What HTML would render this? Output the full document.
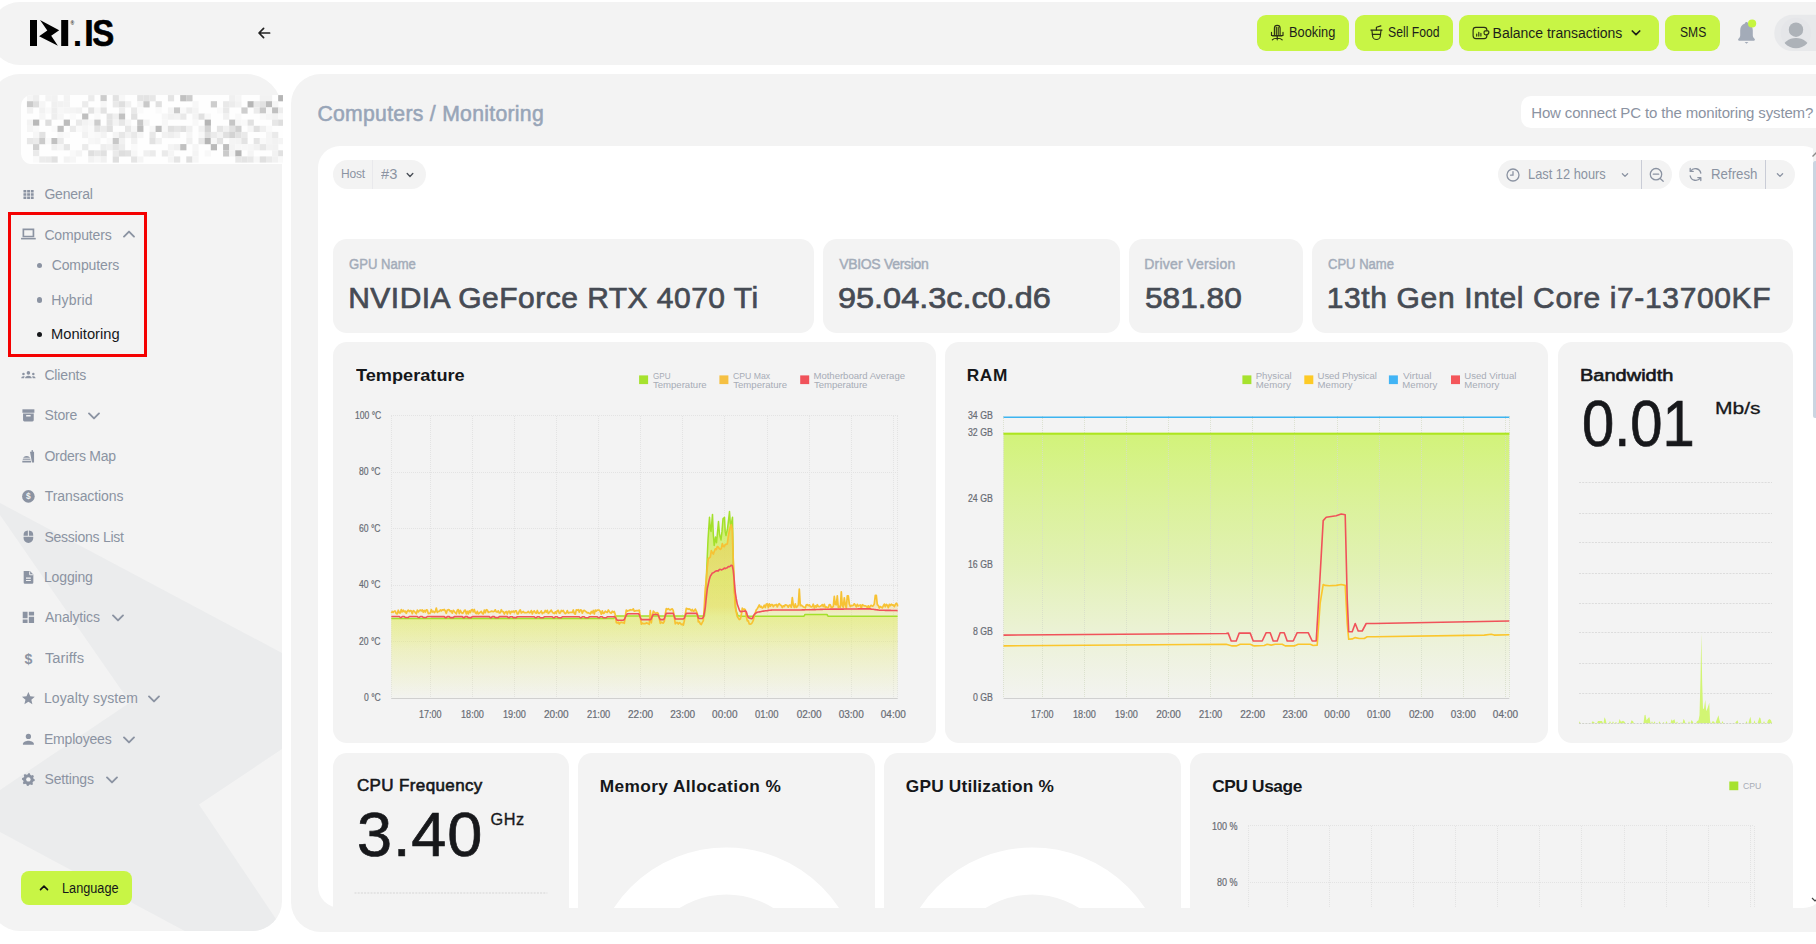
<!DOCTYPE html>
<html lang="en"><head><meta charset="utf-8"><title>Computers / Monitoring</title>
<style>
*{box-sizing:border-box;margin:0;padding:0}
html,body{width:1816px;height:944px;overflow:hidden;background:#fff}
body{position:relative;font-family:"Liberation Sans",sans-serif;color:#8b93a2;font-size:13.5px}
.abs{position:absolute}
.t{position:absolute;white-space:nowrap;line-height:1}
.panel{position:absolute;background:#f3f3f3}
.btn{position:absolute;top:15px;height:36px;background:#c8f545;border-radius:9px;color:#1c1f1a;font-size:13.5px}
.mi{position:absolute;left:44px;white-space:nowrap;line-height:16px;height:16px;font-size:13.5px;color:#8b93a2}
.sub{position:absolute;left:52px;white-space:nowrap;line-height:16px;height:16px;font-size:13.5px;color:#8b93a2}
.ic{position:absolute;left:19.900px;width:16.800px;height:16.800px}
.card{position:absolute;background:#f3f3f3;border-radius:14px}
.lbl{position:absolute;font-size:13px;font-weight:bold;color:#9aa5b5;white-space:nowrap;line-height:1}
.val{position:absolute;font-size:30px;font-weight:bold;color:#3f4650;white-space:nowrap;line-height:1}
.ttl{position:absolute;font-size:16.5px;font-weight:bold;color:#1b1d21;white-space:nowrap;line-height:1}
.pill{position:absolute;top:160px;height:29px;background:#f3f3f3;border-radius:14.5px}
svg{position:absolute;overflow:visible}
svg text{font-family:"Liberation Sans",sans-serif}
</style></head><body>

<div class="panel" style="left:-10px;top:2px;width:1870px;height:63px;border-radius:30px"></div>
<svg style="left:0;top:0" width="140" height="66" viewBox="0 0 140 66">
<rect x="30" y="20" width="7" height="26" fill="#000"/>
<polygon points="40,20 59.2,30.3 51.2,35.7 57.9,45.8 39.1,36.3 47.3,30.6" fill="#000"/>
<rect x="61.2" y="20" width="7" height="26" fill="#000"/>
<text x="70.600" y="25.2" font-size="5" font-weight="bold" fill="#333">®</text>
<text x="72.800" y="46" font-size="34" font-weight="bold" fill="#000">.</text>
<text x="83.800" y="46" font-size="37.8" font-weight="bold" fill="#000">I</text>
<text x="92.200" y="46" font-size="37.8" font-weight="bold" fill="#000" stroke="#000" stroke-width=".6" textLength="22" lengthAdjust="spacingAndGlyphs">S</text>
</svg>
<svg style="left:256px;top:25px" width="16" height="16" viewBox="0 0 16 16"><path d="M13.6 8H3.2M7.6 3.4L3 8l4.6 4.6" fill="none" stroke="#222" stroke-width="1.7" stroke-linecap="round" stroke-linejoin="round"/></svg>
<div class="btn" style="left:1257px;width:92px"></div>
<div class="btn" style="left:1355px;width:98px"></div>
<div class="btn" style="left:1459px;width:200px"></div>
<div class="btn" style="left:1665px;width:55px"></div>
<div class="t" style="left:1288.88px;top:25.25px;font-size:14px;color:#1c1f1a;transform:scaleX(0.9140);transform-origin:0 0;">Booking</div>
<div class="t" style="left:1387.55px;top:25.25px;font-size:14px;color:#1c1f1a;transform:scaleX(0.8714);transform-origin:0 0;">Sell Food</div>
<div class="t" style="left:1492.58px;top:25.95px;font-size:14px;color:#1c1f1a;letter-spacing:-0.009px;">Balance transactions</div>
<div class="t" style="left:1679.66px;top:25.25px;font-size:14px;color:#1c1f1a;transform:scaleX(0.8640);transform-origin:0 0;">SMS</div>
<svg style="left:0;top:0" width="1816" height="66" viewBox="0 0 1816 66" fill="none" stroke="#2b3015" stroke-width="1.15" stroke-linecap="round" stroke-linejoin="round">
<path d="M1274.4 34.8V28.2a2.850 2.850 0 0 1 5.700 0V34.800"/><path d="M1276.300 27.200V34.600M1278.200 27.200V34.600"/>
<path d="M1271.500 32.300V35.500H1283V32.300"/><path d="M1272.600 35.700h9.300" stroke-width="1.500"/><path d="M1277.250 36.300V38"/>
<path d="M1272.300 39.800c1.600-2.100 8.300-2.100 9.900 0M1277.250 38.100v1.700"/>
<path d="M1370.900 30.100H1382"/><path d="M1371.900 30.300l.7 5.600a3.850 3.600 0 0 0 7.700 0l.7-5.600"/><path d="M1372.300 34.300h8.300"/><path d="M1376.400 29.900V27.300L1380.900 25.900"/>
<rect x="1473.100" y="27.400" width="13.800" height="11.200" rx="2.800"/>
<path d="M1485.200 30.800h2.600a1.100 1.100 0 0 1 1.100 1.100v.2a2.700 2.700 0 0 1-2.700 2.700h-.600a1.500 1.500 0 0 1-1.500-1.500v-1.400a1.100 1.100 0 0 1 1.100-1.100z" fill="#c8f545"/>
<path d="M1476.700 36.100V34M1478.800 36.100V32.300M1480.900 36.100V33.400"/>
</svg>
<svg style="left:1630px;top:28px" width="12" height="10" viewBox="0 0 12 10"><path d="M2.300 3l3.700 3.700L9.700 3" fill="none" stroke="#1c1f1a" stroke-width="1.700" stroke-linecap="round" stroke-linejoin="round"/></svg>
<svg style="left:0;top:0" width="1816" height="66" viewBox="0 0 1816 66">
<path d="M1746.500 21.900c-.9 0-1.500.7-1.600 1.500-3 .8-4.700 3.500-4.700 6.800v5.300c0 1.400-1.100 2.600-1.900 3.600-.5.700-.1 1.700.8 1.700h14.800c.9 0 1.300-1 .8-1.700-.8-1-1.900-2.200-1.900-3.600v-5.300c0-3.300-1.700-6-4.700-6.800-.1-.8-.7-1.500-1.600-1.500z" fill="#a3abb8"/>
<path d="M1744.600 42h3.800l-1.900 1.800z" fill="#a3abb8"/>
<circle cx="1752.100" cy="23.500" r="4.100" fill="#c6f53f"/>
<path d="M1792.400 14.800H1830V51.100H1792.400A18.150 18.150 0 0 1 1792.400 14.800z" fill="#e8e9eb"/>
<clipPath id="avc"><circle cx="1796" cy="33" r="15.200"/></clipPath>
<circle cx="1796" cy="33" r="15.200" fill="#e5e6e9"/>
<g clip-path="url(#avc)" fill="#adb2b8"><circle cx="1796" cy="29.700" r="7.200"/><ellipse cx="1796" cy="48.500" rx="13.500" ry="10.400"/></g>
</svg>
<div class="panel" style="left:-10px;top:74px;width:292px;height:856.500px;border-radius:30px 36px 30px 30px;overflow:hidden">
<svg style="left:10px;top:-74px" width="282" height="944" viewBox="0 0 282 944"><polygon points="0,503 282,653 282,749 199,804.5 282,928 282,944 209,944 0,832 0,790 130,702.500 0,515" fill="#ebeced"/></svg>
</div>
<svg style="left:21px;top:94.700px" width="262" height="69.200" viewBox="0 0 262 69.200"><clipPath id="pxc"><path d="M11 0H262V69.200H11A11 11 0 0 1 0 58.200V11A11 11 0 0 1 11 0z"/></clipPath><g clip-path="url(#pxc)"><rect width="262" height="69.200" fill="#fefefe"/>
<rect x="5.9" y="0.1" width="6.23" height="6.23" fill="rgb(245,245,245)"/>
<rect x="12.0" y="0.1" width="6.23" height="6.23" fill="rgb(238,238,238)"/>
<rect x="24.3" y="0.1" width="6.23" height="6.23" fill="rgb(243,243,243)"/>
<rect x="30.4" y="0.1" width="6.23" height="6.23" fill="rgb(242,242,242)"/>
<rect x="42.7" y="0.1" width="6.23" height="6.23" fill="rgb(243,243,243)"/>
<rect x="67.2" y="0.1" width="6.23" height="6.23" fill="rgb(235,235,235)"/>
<rect x="79.5" y="0.1" width="6.23" height="6.23" fill="rgb(204,204,204)"/>
<rect x="91.7" y="0.1" width="6.23" height="6.23" fill="rgb(226,226,226)"/>
<rect x="97.9" y="0.1" width="6.23" height="6.23" fill="rgb(247,247,247)"/>
<rect x="116.2" y="0.1" width="6.23" height="6.23" fill="rgb(228,228,228)"/>
<rect x="122.4" y="0.1" width="6.23" height="6.23" fill="rgb(227,227,227)"/>
<rect x="128.5" y="0.1" width="6.23" height="6.23" fill="rgb(231,231,231)"/>
<rect x="146.9" y="0.1" width="6.23" height="6.23" fill="rgb(228,228,228)"/>
<rect x="159.2" y="0.1" width="6.23" height="6.23" fill="rgb(192,192,192)"/>
<rect x="165.3" y="0.1" width="6.23" height="6.23" fill="rgb(204,204,204)"/>
<rect x="208.2" y="0.1" width="6.23" height="6.23" fill="rgb(240,240,240)"/>
<rect x="214.3" y="0.1" width="6.23" height="6.23" fill="rgb(245,245,245)"/>
<rect x="238.8" y="0.1" width="6.23" height="6.23" fill="rgb(242,242,242)"/>
<rect x="245.0" y="0.1" width="6.23" height="6.23" fill="rgb(242,242,242)"/>
<rect x="257.2" y="0.1" width="6.23" height="6.23" fill="rgb(181,181,181)"/>
<rect x="5.9" y="6.2" width="6.23" height="6.23" fill="rgb(202,202,202)"/>
<rect x="12.0" y="6.2" width="6.23" height="6.23" fill="rgb(222,222,222)"/>
<rect x="18.2" y="6.2" width="6.23" height="6.23" fill="rgb(246,246,246)"/>
<rect x="30.4" y="6.2" width="6.23" height="6.23" fill="rgb(240,240,240)"/>
<rect x="36.5" y="6.2" width="6.23" height="6.23" fill="rgb(242,242,242)"/>
<rect x="42.7" y="6.2" width="6.23" height="6.23" fill="rgb(243,243,243)"/>
<rect x="61.1" y="6.2" width="6.23" height="6.23" fill="rgb(236,236,236)"/>
<rect x="79.5" y="6.2" width="6.23" height="6.23" fill="rgb(247,247,247)"/>
<rect x="91.7" y="6.2" width="6.23" height="6.23" fill="rgb(233,233,233)"/>
<rect x="97.9" y="6.2" width="6.23" height="6.23" fill="rgb(223,223,223)"/>
<rect x="104.0" y="6.2" width="6.23" height="6.23" fill="rgb(241,241,241)"/>
<rect x="116.2" y="6.2" width="6.23" height="6.23" fill="rgb(245,245,245)"/>
<rect x="122.4" y="6.2" width="6.23" height="6.23" fill="rgb(201,201,201)"/>
<rect x="134.6" y="6.2" width="6.23" height="6.23" fill="rgb(224,224,224)"/>
<rect x="171.4" y="6.2" width="6.23" height="6.23" fill="rgb(247,247,247)"/>
<rect x="189.8" y="6.2" width="6.23" height="6.23" fill="rgb(205,205,205)"/>
<rect x="202.1" y="6.2" width="6.23" height="6.23" fill="rgb(233,233,233)"/>
<rect x="208.2" y="6.2" width="6.23" height="6.23" fill="rgb(236,236,236)"/>
<rect x="214.3" y="6.2" width="6.23" height="6.23" fill="rgb(242,242,242)"/>
<rect x="226.6" y="6.2" width="6.23" height="6.23" fill="rgb(182,182,182)"/>
<rect x="232.7" y="6.2" width="6.23" height="6.23" fill="rgb(232,232,232)"/>
<rect x="238.8" y="6.2" width="6.23" height="6.23" fill="rgb(226,226,226)"/>
<rect x="245.0" y="6.2" width="6.23" height="6.23" fill="rgb(188,188,188)"/>
<rect x="251.1" y="6.2" width="6.23" height="6.23" fill="rgb(246,246,246)"/>
<rect x="5.9" y="12.4" width="6.23" height="6.23" fill="rgb(242,242,242)"/>
<rect x="18.2" y="12.4" width="6.23" height="6.23" fill="rgb(242,242,242)"/>
<rect x="24.3" y="12.4" width="6.23" height="6.23" fill="rgb(249,249,249)"/>
<rect x="30.4" y="12.4" width="6.23" height="6.23" fill="rgb(238,238,238)"/>
<rect x="36.5" y="12.4" width="6.23" height="6.23" fill="rgb(247,247,247)"/>
<rect x="42.7" y="12.4" width="6.23" height="6.23" fill="rgb(245,245,245)"/>
<rect x="48.8" y="12.4" width="6.23" height="6.23" fill="rgb(244,244,244)"/>
<rect x="54.9" y="12.4" width="6.23" height="6.23" fill="rgb(242,242,242)"/>
<rect x="67.2" y="12.4" width="6.23" height="6.23" fill="rgb(227,227,227)"/>
<rect x="73.3" y="12.4" width="6.23" height="6.23" fill="rgb(247,247,247)"/>
<rect x="79.5" y="12.4" width="6.23" height="6.23" fill="rgb(227,227,227)"/>
<rect x="97.9" y="12.4" width="6.23" height="6.23" fill="rgb(238,238,238)"/>
<rect x="110.1" y="12.4" width="6.23" height="6.23" fill="rgb(233,233,233)"/>
<rect x="116.2" y="12.4" width="6.23" height="6.23" fill="rgb(250,250,250)"/>
<rect x="134.6" y="12.4" width="6.23" height="6.23" fill="rgb(250,250,250)"/>
<rect x="146.9" y="12.4" width="6.23" height="6.23" fill="rgb(244,244,244)"/>
<rect x="153.0" y="12.4" width="6.23" height="6.23" fill="rgb(201,201,201)"/>
<rect x="159.2" y="12.4" width="6.23" height="6.23" fill="rgb(249,249,249)"/>
<rect x="165.3" y="12.4" width="6.23" height="6.23" fill="rgb(237,237,237)"/>
<rect x="171.4" y="12.4" width="6.23" height="6.23" fill="rgb(244,244,244)"/>
<rect x="195.9" y="12.4" width="6.23" height="6.23" fill="rgb(250,250,250)"/>
<rect x="202.1" y="12.4" width="6.23" height="6.23" fill="rgb(233,233,233)"/>
<rect x="220.4" y="12.4" width="6.23" height="6.23" fill="rgb(206,206,206)"/>
<rect x="232.7" y="12.4" width="6.23" height="6.23" fill="rgb(236,236,236)"/>
<rect x="238.8" y="12.4" width="6.23" height="6.23" fill="rgb(201,201,201)"/>
<rect x="245.0" y="12.4" width="6.23" height="6.23" fill="rgb(248,248,248)"/>
<rect x="251.1" y="12.4" width="6.23" height="6.23" fill="rgb(192,192,192)"/>
<rect x="257.2" y="12.4" width="6.23" height="6.23" fill="rgb(237,237,237)"/>
<rect x="18.2" y="18.5" width="6.23" height="6.23" fill="rgb(246,246,246)"/>
<rect x="30.4" y="18.5" width="6.23" height="6.23" fill="rgb(238,238,238)"/>
<rect x="36.5" y="18.5" width="6.23" height="6.23" fill="rgb(246,246,246)"/>
<rect x="48.8" y="18.5" width="6.23" height="6.23" fill="rgb(250,250,250)"/>
<rect x="61.1" y="18.5" width="6.23" height="6.23" fill="rgb(192,192,192)"/>
<rect x="73.3" y="18.5" width="6.23" height="6.23" fill="rgb(250,250,250)"/>
<rect x="85.6" y="18.5" width="6.23" height="6.23" fill="rgb(227,227,227)"/>
<rect x="91.7" y="18.5" width="6.23" height="6.23" fill="rgb(240,240,240)"/>
<rect x="97.9" y="18.5" width="6.23" height="6.23" fill="rgb(194,194,194)"/>
<rect x="110.1" y="18.5" width="6.23" height="6.23" fill="rgb(225,225,225)"/>
<rect x="140.8" y="18.5" width="6.23" height="6.23" fill="rgb(246,246,246)"/>
<rect x="146.9" y="18.5" width="6.23" height="6.23" fill="rgb(241,241,241)"/>
<rect x="153.0" y="18.5" width="6.23" height="6.23" fill="rgb(243,243,243)"/>
<rect x="159.2" y="18.5" width="6.23" height="6.23" fill="rgb(233,233,233)"/>
<rect x="171.4" y="18.5" width="6.23" height="6.23" fill="rgb(244,244,244)"/>
<rect x="177.5" y="18.5" width="6.23" height="6.23" fill="rgb(225,225,225)"/>
<rect x="183.7" y="18.5" width="6.23" height="6.23" fill="rgb(248,248,248)"/>
<rect x="202.1" y="18.5" width="6.23" height="6.23" fill="rgb(241,241,241)"/>
<rect x="214.3" y="18.5" width="6.23" height="6.23" fill="rgb(249,249,249)"/>
<rect x="238.8" y="18.5" width="6.23" height="6.23" fill="rgb(249,249,249)"/>
<rect x="245.0" y="18.5" width="6.23" height="6.23" fill="rgb(245,245,245)"/>
<rect x="251.1" y="18.5" width="6.23" height="6.23" fill="rgb(242,242,242)"/>
<rect x="257.2" y="18.5" width="6.23" height="6.23" fill="rgb(249,249,249)"/>
<rect x="5.9" y="24.6" width="6.23" height="6.23" fill="rgb(243,243,243)"/>
<rect x="12.0" y="24.6" width="6.23" height="6.23" fill="rgb(185,185,185)"/>
<rect x="24.3" y="24.6" width="6.23" height="6.23" fill="rgb(222,222,222)"/>
<rect x="42.7" y="24.6" width="6.23" height="6.23" fill="rgb(189,189,189)"/>
<rect x="54.9" y="24.6" width="6.23" height="6.23" fill="rgb(234,234,234)"/>
<rect x="61.1" y="24.6" width="6.23" height="6.23" fill="rgb(243,243,243)"/>
<rect x="67.2" y="24.6" width="6.23" height="6.23" fill="rgb(247,247,247)"/>
<rect x="73.3" y="24.6" width="6.23" height="6.23" fill="rgb(204,204,204)"/>
<rect x="85.6" y="24.6" width="6.23" height="6.23" fill="rgb(227,227,227)"/>
<rect x="91.7" y="24.6" width="6.23" height="6.23" fill="rgb(244,244,244)"/>
<rect x="97.9" y="24.6" width="6.23" height="6.23" fill="rgb(231,231,231)"/>
<rect x="104.0" y="24.6" width="6.23" height="6.23" fill="rgb(246,246,246)"/>
<rect x="116.2" y="24.6" width="6.23" height="6.23" fill="rgb(199,199,199)"/>
<rect x="122.4" y="24.6" width="6.23" height="6.23" fill="rgb(244,244,244)"/>
<rect x="140.8" y="24.6" width="6.23" height="6.23" fill="rgb(247,247,247)"/>
<rect x="171.4" y="24.6" width="6.23" height="6.23" fill="rgb(248,248,248)"/>
<rect x="183.7" y="24.6" width="6.23" height="6.23" fill="rgb(182,182,182)"/>
<rect x="208.2" y="24.6" width="6.23" height="6.23" fill="rgb(198,198,198)"/>
<rect x="214.3" y="24.6" width="6.23" height="6.23" fill="rgb(247,247,247)"/>
<rect x="220.4" y="24.6" width="6.23" height="6.23" fill="rgb(249,249,249)"/>
<rect x="226.6" y="24.6" width="6.23" height="6.23" fill="rgb(225,225,225)"/>
<rect x="251.1" y="24.6" width="6.23" height="6.23" fill="rgb(231,231,231)"/>
<rect x="257.2" y="24.6" width="6.23" height="6.23" fill="rgb(222,222,222)"/>
<rect x="5.9" y="30.8" width="6.23" height="6.23" fill="rgb(245,245,245)"/>
<rect x="12.0" y="30.8" width="6.23" height="6.23" fill="rgb(249,249,249)"/>
<rect x="30.4" y="30.8" width="6.23" height="6.23" fill="rgb(250,250,250)"/>
<rect x="36.5" y="30.8" width="6.23" height="6.23" fill="rgb(192,192,192)"/>
<rect x="48.8" y="30.8" width="6.23" height="6.23" fill="rgb(235,235,235)"/>
<rect x="54.9" y="30.8" width="6.23" height="6.23" fill="rgb(250,250,250)"/>
<rect x="61.1" y="30.8" width="6.23" height="6.23" fill="rgb(246,246,246)"/>
<rect x="67.2" y="30.8" width="6.23" height="6.23" fill="rgb(250,250,250)"/>
<rect x="73.3" y="30.8" width="6.23" height="6.23" fill="rgb(228,228,228)"/>
<rect x="79.5" y="30.8" width="6.23" height="6.23" fill="rgb(236,236,236)"/>
<rect x="85.6" y="30.8" width="6.23" height="6.23" fill="rgb(224,224,224)"/>
<rect x="104.0" y="30.8" width="6.23" height="6.23" fill="rgb(231,231,231)"/>
<rect x="110.1" y="30.8" width="6.23" height="6.23" fill="rgb(247,247,247)"/>
<rect x="116.2" y="30.8" width="6.23" height="6.23" fill="rgb(189,189,189)"/>
<rect x="128.5" y="30.8" width="6.23" height="6.23" fill="rgb(247,247,247)"/>
<rect x="134.6" y="30.8" width="6.23" height="6.23" fill="rgb(189,189,189)"/>
<rect x="140.8" y="30.8" width="6.23" height="6.23" fill="rgb(248,248,248)"/>
<rect x="146.9" y="30.8" width="6.23" height="6.23" fill="rgb(224,224,224)"/>
<rect x="153.0" y="30.8" width="6.23" height="6.23" fill="rgb(230,230,230)"/>
<rect x="159.2" y="30.8" width="6.23" height="6.23" fill="rgb(224,224,224)"/>
<rect x="165.3" y="30.8" width="6.23" height="6.23" fill="rgb(240,240,240)"/>
<rect x="177.5" y="30.8" width="6.23" height="6.23" fill="rgb(241,241,241)"/>
<rect x="183.7" y="30.8" width="6.23" height="6.23" fill="rgb(211,211,211)"/>
<rect x="195.9" y="30.8" width="6.23" height="6.23" fill="rgb(229,229,229)"/>
<rect x="202.1" y="30.8" width="6.23" height="6.23" fill="rgb(241,241,241)"/>
<rect x="208.2" y="30.8" width="6.23" height="6.23" fill="rgb(226,226,226)"/>
<rect x="214.3" y="30.8" width="6.23" height="6.23" fill="rgb(208,208,208)"/>
<rect x="226.6" y="30.8" width="6.23" height="6.23" fill="rgb(246,246,246)"/>
<rect x="232.7" y="30.8" width="6.23" height="6.23" fill="rgb(224,224,224)"/>
<rect x="238.8" y="30.8" width="6.23" height="6.23" fill="rgb(240,240,240)"/>
<rect x="245.0" y="30.8" width="6.23" height="6.23" fill="rgb(250,250,250)"/>
<rect x="12.0" y="36.9" width="6.23" height="6.23" fill="rgb(246,246,246)"/>
<rect x="18.2" y="36.9" width="6.23" height="6.23" fill="rgb(226,226,226)"/>
<rect x="36.5" y="36.9" width="6.23" height="6.23" fill="rgb(247,247,247)"/>
<rect x="42.7" y="36.9" width="6.23" height="6.23" fill="rgb(250,250,250)"/>
<rect x="61.1" y="36.9" width="6.23" height="6.23" fill="rgb(242,242,242)"/>
<rect x="67.2" y="36.9" width="6.23" height="6.23" fill="rgb(250,250,250)"/>
<rect x="73.3" y="36.9" width="6.23" height="6.23" fill="rgb(248,248,248)"/>
<rect x="79.5" y="36.9" width="6.23" height="6.23" fill="rgb(243,243,243)"/>
<rect x="91.7" y="36.9" width="6.23" height="6.23" fill="rgb(244,244,244)"/>
<rect x="97.9" y="36.9" width="6.23" height="6.23" fill="rgb(231,231,231)"/>
<rect x="104.0" y="36.9" width="6.23" height="6.23" fill="rgb(242,242,242)"/>
<rect x="110.1" y="36.9" width="6.23" height="6.23" fill="rgb(233,233,233)"/>
<rect x="116.2" y="36.9" width="6.23" height="6.23" fill="rgb(246,246,246)"/>
<rect x="128.5" y="36.9" width="6.23" height="6.23" fill="rgb(232,232,232)"/>
<rect x="140.8" y="36.9" width="6.23" height="6.23" fill="rgb(241,241,241)"/>
<rect x="146.9" y="36.9" width="6.23" height="6.23" fill="rgb(238,238,238)"/>
<rect x="153.0" y="36.9" width="6.23" height="6.23" fill="rgb(243,243,243)"/>
<rect x="165.3" y="36.9" width="6.23" height="6.23" fill="rgb(245,245,245)"/>
<rect x="177.5" y="36.9" width="6.23" height="6.23" fill="rgb(248,248,248)"/>
<rect x="183.7" y="36.9" width="6.23" height="6.23" fill="rgb(223,223,223)"/>
<rect x="189.8" y="36.9" width="6.23" height="6.23" fill="rgb(235,235,235)"/>
<rect x="195.9" y="36.9" width="6.23" height="6.23" fill="rgb(243,243,243)"/>
<rect x="202.1" y="36.9" width="6.23" height="6.23" fill="rgb(224,224,224)"/>
<rect x="208.2" y="36.9" width="6.23" height="6.23" fill="rgb(211,211,211)"/>
<rect x="214.3" y="36.9" width="6.23" height="6.23" fill="rgb(226,226,226)"/>
<rect x="220.4" y="36.9" width="6.23" height="6.23" fill="rgb(234,234,234)"/>
<rect x="245.0" y="36.9" width="6.23" height="6.23" fill="rgb(245,245,245)"/>
<rect x="251.1" y="36.9" width="6.23" height="6.23" fill="rgb(234,234,234)"/>
<rect x="5.9" y="43.0" width="6.23" height="6.23" fill="rgb(231,231,231)"/>
<rect x="12.0" y="43.0" width="6.23" height="6.23" fill="rgb(235,235,235)"/>
<rect x="18.2" y="43.0" width="6.23" height="6.23" fill="rgb(203,203,203)"/>
<rect x="24.3" y="43.0" width="6.23" height="6.23" fill="rgb(249,249,249)"/>
<rect x="30.4" y="43.0" width="6.23" height="6.23" fill="rgb(193,193,193)"/>
<rect x="36.5" y="43.0" width="6.23" height="6.23" fill="rgb(234,234,234)"/>
<rect x="67.2" y="43.0" width="6.23" height="6.23" fill="rgb(247,247,247)"/>
<rect x="73.3" y="43.0" width="6.23" height="6.23" fill="rgb(245,245,245)"/>
<rect x="85.6" y="43.0" width="6.23" height="6.23" fill="rgb(249,249,249)"/>
<rect x="91.7" y="43.0" width="6.23" height="6.23" fill="rgb(200,200,200)"/>
<rect x="97.9" y="43.0" width="6.23" height="6.23" fill="rgb(241,241,241)"/>
<rect x="110.1" y="43.0" width="6.23" height="6.23" fill="rgb(241,241,241)"/>
<rect x="128.5" y="43.0" width="6.23" height="6.23" fill="rgb(226,226,226)"/>
<rect x="134.6" y="43.0" width="6.23" height="6.23" fill="rgb(241,241,241)"/>
<rect x="165.3" y="43.0" width="6.23" height="6.23" fill="rgb(240,240,240)"/>
<rect x="177.5" y="43.0" width="6.23" height="6.23" fill="rgb(232,232,232)"/>
<rect x="183.7" y="43.0" width="6.23" height="6.23" fill="rgb(181,181,181)"/>
<rect x="189.8" y="43.0" width="6.23" height="6.23" fill="rgb(247,247,247)"/>
<rect x="195.9" y="43.0" width="6.23" height="6.23" fill="rgb(226,226,226)"/>
<rect x="208.2" y="43.0" width="6.23" height="6.23" fill="rgb(244,244,244)"/>
<rect x="214.3" y="43.0" width="6.23" height="6.23" fill="rgb(243,243,243)"/>
<rect x="220.4" y="43.0" width="6.23" height="6.23" fill="rgb(227,227,227)"/>
<rect x="232.7" y="43.0" width="6.23" height="6.23" fill="rgb(229,229,229)"/>
<rect x="238.8" y="43.0" width="6.23" height="6.23" fill="rgb(249,249,249)"/>
<rect x="245.0" y="43.0" width="6.23" height="6.23" fill="rgb(245,245,245)"/>
<rect x="251.1" y="43.0" width="6.23" height="6.23" fill="rgb(242,242,242)"/>
<rect x="257.2" y="43.0" width="6.23" height="6.23" fill="rgb(244,244,244)"/>
<rect x="12.0" y="49.1" width="6.23" height="6.23" fill="rgb(209,209,209)"/>
<rect x="30.4" y="49.1" width="6.23" height="6.23" fill="rgb(240,240,240)"/>
<rect x="36.5" y="49.1" width="6.23" height="6.23" fill="rgb(246,246,246)"/>
<rect x="42.7" y="49.1" width="6.23" height="6.23" fill="rgb(230,230,230)"/>
<rect x="61.1" y="49.1" width="6.23" height="6.23" fill="rgb(235,235,235)"/>
<rect x="79.5" y="49.1" width="6.23" height="6.23" fill="rgb(238,238,238)"/>
<rect x="85.6" y="49.1" width="6.23" height="6.23" fill="rgb(241,241,241)"/>
<rect x="91.7" y="49.1" width="6.23" height="6.23" fill="rgb(229,229,229)"/>
<rect x="97.9" y="49.1" width="6.23" height="6.23" fill="rgb(237,237,237)"/>
<rect x="110.1" y="49.1" width="6.23" height="6.23" fill="rgb(250,250,250)"/>
<rect x="146.9" y="49.1" width="6.23" height="6.23" fill="rgb(244,244,244)"/>
<rect x="153.0" y="49.1" width="6.23" height="6.23" fill="rgb(240,240,240)"/>
<rect x="159.2" y="49.1" width="6.23" height="6.23" fill="rgb(192,192,192)"/>
<rect x="171.4" y="49.1" width="6.23" height="6.23" fill="rgb(246,246,246)"/>
<rect x="189.8" y="49.1" width="6.23" height="6.23" fill="rgb(186,186,186)"/>
<rect x="202.1" y="49.1" width="6.23" height="6.23" fill="rgb(190,190,190)"/>
<rect x="208.2" y="49.1" width="6.23" height="6.23" fill="rgb(243,243,243)"/>
<rect x="214.3" y="49.1" width="6.23" height="6.23" fill="rgb(247,247,247)"/>
<rect x="220.4" y="49.1" width="6.23" height="6.23" fill="rgb(247,247,247)"/>
<rect x="226.6" y="49.1" width="6.23" height="6.23" fill="rgb(246,246,246)"/>
<rect x="232.7" y="49.1" width="6.23" height="6.23" fill="rgb(242,242,242)"/>
<rect x="238.8" y="49.1" width="6.23" height="6.23" fill="rgb(231,231,231)"/>
<rect x="245.0" y="49.1" width="6.23" height="6.23" fill="rgb(243,243,243)"/>
<rect x="251.1" y="49.1" width="6.23" height="6.23" fill="rgb(242,242,242)"/>
<rect x="12.0" y="55.3" width="6.23" height="6.23" fill="rgb(234,234,234)"/>
<rect x="48.8" y="55.3" width="6.23" height="6.23" fill="rgb(249,249,249)"/>
<rect x="54.9" y="55.3" width="6.23" height="6.23" fill="rgb(244,244,244)"/>
<rect x="67.2" y="55.3" width="6.23" height="6.23" fill="rgb(223,223,223)"/>
<rect x="73.3" y="55.3" width="6.23" height="6.23" fill="rgb(231,231,231)"/>
<rect x="79.5" y="55.3" width="6.23" height="6.23" fill="rgb(225,225,225)"/>
<rect x="91.7" y="55.3" width="6.23" height="6.23" fill="rgb(234,234,234)"/>
<rect x="97.9" y="55.3" width="6.23" height="6.23" fill="rgb(222,222,222)"/>
<rect x="104.0" y="55.3" width="6.23" height="6.23" fill="rgb(226,226,226)"/>
<rect x="110.1" y="55.3" width="6.23" height="6.23" fill="rgb(247,247,247)"/>
<rect x="122.4" y="55.3" width="6.23" height="6.23" fill="rgb(240,240,240)"/>
<rect x="128.5" y="55.3" width="6.23" height="6.23" fill="rgb(235,235,235)"/>
<rect x="140.8" y="55.3" width="6.23" height="6.23" fill="rgb(234,234,234)"/>
<rect x="146.9" y="55.3" width="6.23" height="6.23" fill="rgb(245,245,245)"/>
<rect x="171.4" y="55.3" width="6.23" height="6.23" fill="rgb(244,244,244)"/>
<rect x="183.7" y="55.3" width="6.23" height="6.23" fill="rgb(248,248,248)"/>
<rect x="202.1" y="55.3" width="6.23" height="6.23" fill="rgb(202,202,202)"/>
<rect x="208.2" y="55.3" width="6.23" height="6.23" fill="rgb(244,244,244)"/>
<rect x="214.3" y="55.3" width="6.23" height="6.23" fill="rgb(181,181,181)"/>
<rect x="226.6" y="55.3" width="6.23" height="6.23" fill="rgb(245,245,245)"/>
<rect x="251.1" y="55.3" width="6.23" height="6.23" fill="rgb(242,242,242)"/>
<rect x="257.2" y="55.3" width="6.23" height="6.23" fill="rgb(225,225,225)"/>
<rect x="12.0" y="61.4" width="6.23" height="6.23" fill="rgb(250,250,250)"/>
<rect x="18.2" y="61.4" width="6.23" height="6.23" fill="rgb(236,236,236)"/>
<rect x="24.3" y="61.4" width="6.23" height="6.23" fill="rgb(235,235,235)"/>
<rect x="30.4" y="61.4" width="6.23" height="6.23" fill="rgb(225,225,225)"/>
<rect x="42.7" y="61.4" width="6.23" height="6.23" fill="rgb(243,243,243)"/>
<rect x="48.8" y="61.4" width="6.23" height="6.23" fill="rgb(246,246,246)"/>
<rect x="67.2" y="61.4" width="6.23" height="6.23" fill="rgb(242,242,242)"/>
<rect x="73.3" y="61.4" width="6.23" height="6.23" fill="rgb(247,247,247)"/>
<rect x="79.5" y="61.4" width="6.23" height="6.23" fill="rgb(241,241,241)"/>
<rect x="91.7" y="61.4" width="6.23" height="6.23" fill="rgb(223,223,223)"/>
<rect x="110.1" y="61.4" width="6.23" height="6.23" fill="rgb(229,229,229)"/>
<rect x="116.2" y="61.4" width="6.23" height="6.23" fill="rgb(245,245,245)"/>
<rect x="146.9" y="61.4" width="6.23" height="6.23" fill="rgb(245,245,245)"/>
<rect x="153.0" y="61.4" width="6.23" height="6.23" fill="rgb(229,229,229)"/>
<rect x="165.3" y="61.4" width="6.23" height="6.23" fill="rgb(223,223,223)"/>
<rect x="171.4" y="61.4" width="6.23" height="6.23" fill="rgb(246,246,246)"/>
<rect x="214.3" y="61.4" width="6.23" height="6.23" fill="rgb(231,231,231)"/>
<rect x="220.4" y="61.4" width="6.23" height="6.23" fill="rgb(228,228,228)"/>
<rect x="226.6" y="61.4" width="6.23" height="6.23" fill="rgb(232,232,232)"/>
<rect x="232.7" y="61.4" width="6.23" height="6.23" fill="rgb(247,247,247)"/>
<rect x="238.8" y="61.4" width="6.23" height="6.23" fill="rgb(224,224,224)"/>
<rect x="245.0" y="61.4" width="6.23" height="6.23" fill="rgb(234,234,234)"/>
<rect x="251.1" y="61.4" width="6.23" height="6.23" fill="rgb(241,241,241)"/>
<rect x="257.2" y="61.4" width="6.23" height="6.23" fill="rgb(249,249,249)"/>
</g></svg>
<svg class="ic" style="top:185.5px" viewBox="0 0 16 16"><rect x="3.3" y="3.8" width="2.700" height="2.400" fill="#8b93a2"/><rect x="3.3" y="6.9" width="2.700" height="2.400" fill="#8b93a2"/><rect x="3.3" y="10.0" width="2.700" height="2.400" fill="#8b93a2"/><rect x="6.8" y="3.8" width="2.700" height="2.400" fill="#8b93a2"/><rect x="6.8" y="6.9" width="2.700" height="2.400" fill="#8b93a2"/><rect x="6.8" y="10.0" width="2.700" height="2.400" fill="#8b93a2"/><rect x="10.3" y="3.8" width="2.700" height="2.400" fill="#8b93a2"/><rect x="10.3" y="6.9" width="2.700" height="2.400" fill="#8b93a2"/><rect x="10.3" y="10.0" width="2.700" height="2.400" fill="#8b93a2"/></svg>
<div class="t" style="left:44.40px;top:187.05px;font-size:14px;color:#8b93a2;letter-spacing:-0.210px;">General</div>
<svg class="ic" style="top:226.2px" viewBox="0 0 16 16"><path d="M3.200 3.300h9.600v6.700H3.200z" fill="none" stroke="#8b93a2" stroke-width="1.600"/><path d="M1 11.300h14v1.500H1z" fill="#8b93a2"/></svg>
<div class="t" style="left:44.40px;top:227.75px;font-size:14px;color:#8b93a2;letter-spacing:-0.134px;">Computers</div>
<svg style="left:122px;top:228.1px" width="14" height="13" viewBox="0 0 14 13"><path d="M2 8.600L7 3.600l5 5" fill="none" stroke="#8b93a2" stroke-width="1.900" stroke-linecap="round" stroke-linejoin="round"/></svg>
<svg class="ic" style="top:366.9px" viewBox="0 0 16 16"><circle cx="8" cy="5.600" r="1.700" fill="#8b93a2"/><path d="M4.800 10.800c0-1.700 1.400-2.500 3.200-2.500s3.200.8 3.200 2.500z" fill="#8b93a2"/><circle cx="3.300" cy="6.600" r="1.200" fill="#8b93a2"/><circle cx="12.700" cy="6.600" r="1.200" fill="#8b93a2"/><path d="M1.200 10.800c0-1.300.8-2 2.100-2 .5 0 .9.100 1.200.3-.4.500-.6 1-.6 1.700zM14.800 10.800c0-1.300-.8-2-2.100-2-.5 0-.9.100-1.200.3.400.5.600 1 .6 1.700z" fill="#8b93a2"/></svg>
<div class="t" style="left:44.40px;top:368.45px;font-size:14px;color:#8b93a2;letter-spacing:-.15px;">Clients</div>
<svg class="ic" style="top:406.9px" viewBox="0 0 16 16"><path d="M2.300 2.200h11.400v3.300H2.300z" fill="#8b93a2"/><path d="M2.900 6.300h10.200v6.200a1.300 1.300 0 0 1-1.300 1.300H4.200a1.300 1.300 0 0 1-1.300-1.300z" fill="#8b93a2"/><rect x="5.800" y="7.600" width="4.400" height="1.400" rx=".5" fill="#f3f3f3"/></svg>
<div class="t" style="left:44.47px;top:408.45px;font-size:14px;color:#8b93a2;letter-spacing:-.15px;">Store</div>
<svg style="left:87px;top:408.8px" width="14" height="13" viewBox="0 0 14 13"><path d="M2 4.400l5 5 5-5" fill="none" stroke="#8b93a2" stroke-width="1.900" stroke-linecap="round" stroke-linejoin="round"/></svg>
<svg class="ic" style="top:447.8px" viewBox="0 0 16 16"><path d="M2.200 12.200h8.300v1.500H2.200zM2.600 11.300c0-2.200 1.600-3.600 3.700-3.600s3.700 1.400 3.700 3.600z" fill="#8b93a2"/><path d="M9.500 3.600h3.900v10.100h-2z" fill="#8b93a2"/><rect x="11" y="2" width="1.300" height="2.200" fill="#8b93a2"/><rect x="2" y="9.300" width="8" height=".8" fill="#f3f3f3"/></svg>
<div class="t" style="left:44.47px;top:449.35px;font-size:14px;color:#8b93a2;letter-spacing:-0.259px;">Orders Map</div>
<svg class="ic" style="top:487.7px" viewBox="0 0 16 16"><circle cx="8" cy="8" r="6" fill="#8b93a2"/><text x="8" y="10.800" font-size="8" font-weight="bold" text-anchor="middle" fill="#f3f3f3">$</text></svg>
<div class="t" style="left:44.82px;top:489.25px;font-size:14px;color:#8b93a2;letter-spacing:-0.090px;">Transactions</div>
<svg class="ic" style="top:528.1px" viewBox="0 0 16 16"><path d="M3.400 8.400h9.200v1.300a4.600 4.600 0 0 1-9.200 0zM3.400 7.500V6.800a4.400 4.400 0 0 1 4.100-4.500v5.200zM8.500 2.300a4.400 4.400 0 0 1 4.100 4.500v.7H8.500z" fill="#8b93a2"/></svg>
<div class="t" style="left:44.47px;top:529.65px;font-size:14px;color:#8b93a2;letter-spacing:-0.247px;">Sessions List</div>
<svg class="ic" style="top:568.6px" viewBox="0 0 16 16"><path d="M3.500 2h6l3.200 3.200v7.600a1.200 1.200 0 0 1-1.200 1.200H4.700a1.200 1.200 0 0 1-1.200-1.200z" fill="#8b93a2"/><path d="M9.200 2.300v3.200h3.200" fill="none" stroke="#f3f3f3" stroke-width=".9"/><path d="M5.700 8.700h4.600M5.700 10.900h4.600" stroke="#f3f3f3" stroke-width="1"/></svg>
<div class="t" style="left:43.98px;top:570.15px;font-size:14px;color:#8b93a2;letter-spacing:-.15px;">Logging</div>
<svg class="ic" style="top:608.9px" viewBox="0 0 16 16"><path d="M2.600 2.600h4.600v6.200H2.600zM8.400 2.600h5v3.600h-5zM8.400 7.400h5v6h-5zM2.600 10h4.600v3.400H2.600z" fill="#8b93a2"/></svg>
<div class="t" style="left:45.10px;top:610.45px;font-size:14px;color:#8b93a2;letter-spacing:-.15px;">Analytics</div>
<svg style="left:111px;top:610.8px" width="14" height="13" viewBox="0 0 14 13"><path d="M2 4.400l5 5 5-5" fill="none" stroke="#8b93a2" stroke-width="1.900" stroke-linecap="round" stroke-linejoin="round"/></svg>
<svg class="ic" style="top:649.6px" viewBox="0 0 16 16"><text x="8" y="13" font-size="13.500" font-weight="bold" text-anchor="middle" fill="#8b93a2">$</text></svg>
<div class="t" style="left:44.81px;top:651.15px;font-size:14px;color:#8b93a2;transform:scaleX(1.0515);transform-origin:0 0;">Tariffs</div>
<svg class="ic" style="top:689.9px" viewBox="0 0 16 16"><path d="M8 2l1.800 4 4.300.4-3.300 2.900 1 4.200L8 11.300l-3.800 2.200 1-4.200L1.900 6.400 6.200 6z" fill="#8b93a2"/></svg>
<div class="t" style="left:43.98px;top:691.45px;font-size:14px;color:#8b93a2;letter-spacing:0.102px;">Loyalty system</div>
<svg style="left:147px;top:691.8px" width="14" height="13" viewBox="0 0 14 13"><path d="M2 4.400l5 5 5-5" fill="none" stroke="#8b93a2" stroke-width="1.900" stroke-linecap="round" stroke-linejoin="round"/></svg>
<svg class="ic" style="top:730.8px" viewBox="0 0 16 16"><circle cx="8" cy="5.200" r="2.500" fill="#8b93a2"/><path d="M2.800 13v-.8c0-2 3.400-3 5.200-3s5.200 1 5.200 3v.8z" fill="#8b93a2"/></svg>
<div class="t" style="left:43.98px;top:732.35px;font-size:14px;color:#8b93a2;letter-spacing:-0.190px;">Employees</div>
<svg style="left:122px;top:732.7px" width="14" height="13" viewBox="0 0 14 13"><path d="M2 4.400l5 5 5-5" fill="none" stroke="#8b93a2" stroke-width="1.900" stroke-linecap="round" stroke-linejoin="round"/></svg>
<svg class="ic" style="top:770.9px" viewBox="0 0 16 16"><path d="M8 1.800l1.400.2.500 1.500 1.100.6 1.500-.5 1 1.200-.7 1.400.3 1.200 1.300.8-.2 1.500-1.500.5-.6 1.100.5 1.500-1.200.9-1.400-.7-1.200.3-.8 1.300-1.500-.2-.5-1.500-1.100-.6-1.500.5-.9-1.200.7-1.400-.3-1.200-1.300-.8.2-1.500 1.500-.5.600-1.100-.5-1.500 1.200-.9 1.400.7 1.200-.3z" fill="#8b93a2" transform="translate(.3 .3) scale(.96)"/><circle cx="8" cy="8" r="2.100" fill="#f3f3f3"/></svg>
<div class="t" style="left:44.47px;top:772.45px;font-size:14px;color:#8b93a2;letter-spacing:-.15px;">Settings</div>
<svg style="left:105px;top:772.8px" width="14" height="13" viewBox="0 0 14 13"><path d="M2 4.400l5 5 5-5" fill="none" stroke="#8b93a2" stroke-width="1.900" stroke-linecap="round" stroke-linejoin="round"/></svg>
<div class="abs" style="left:36.6px;top:262.6px;width:5.400px;height:5.400px;border-radius:50%;background:#8b93a2"></div>
<div class="t" style="left:51.70px;top:257.95px;font-size:14px;color:#8b93a2;letter-spacing:-0.109px;">Computers</div>
<div class="abs" style="left:36.6px;top:297.3px;width:5.400px;height:5.400px;border-radius:50%;background:#8b93a2"></div>
<div class="t" style="left:51.28px;top:292.65px;font-size:14px;color:#8b93a2;letter-spacing:0.174px;">Hybrid</div>
<div class="abs" style="left:36.6px;top:332.0px;width:5.400px;height:5.400px;border-radius:50%;background:#15171a"></div>
<div class="t" style="left:51.22px;top:327.35px;font-size:14px;color:#15171a;transform:scaleX(1.0497);transform-origin:0 0;">Monitoring</div>
<div class="abs" style="left:7.500px;top:212.300px;width:139.500px;height:145px;border:3px solid #f40000"></div>
<div class="abs" style="left:21px;top:871px;width:111px;height:34px;border-radius:8px;background:#c8f545"></div>
<svg style="left:38px;top:882px" width="12" height="12" viewBox="0 0 12 12"><path d="M2.500 7.600L6 4.100l3.500 3.500" fill="none" stroke="#111" stroke-width="1.600" stroke-linecap="round" stroke-linejoin="round"/></svg>
<div class="t" style="left:62.18px;top:881.35px;font-size:14px;color:#15171a;transform:scaleX(0.9083);transform-origin:0 0;">Language</div>
<div class="panel" style="left:291px;top:74px;width:1600px;height:858px;border-radius:30px"></div>
<div class="t" style="left:317.44px;top:103.05px;font-size:21.2px;color:#98a5b8;letter-spacing:0.289px;-webkit-text-stroke:0.55px #98a5b8;">Computers / Monitoring</div>
<div class="abs" style="left:1521px;top:95.700px;width:320px;height:32.500px;border-radius:10px;background:#fff"></div>
<div class="t" style="left:1531.20px;top:104.60px;font-size:15px;color:#8b93a2;letter-spacing:-0.141px;">How connect PC to the monitoring system?</div>
<div class="abs" style="left:318px;top:146px;width:1507px;height:762px;border-radius:22px;background:#fff"></div>
<div class="abs" style="left:1812.800px;top:140px;width:4px;height:21px;background:#f3f3f3"></div>
<div class="abs" style="left:1812.800px;top:161px;width:4px;height:257px;background:#cbd5e1;border-radius:2px 0 0 2px"></div>
<svg style="left:1806px;top:147px" width="10" height="10" viewBox="0 0 10 10"><path d="M6.500 9.500L10 6l3 3.500" fill="none" stroke="#8a8a8a" stroke-width="1.300"/></svg>
<svg style="left:1806px;top:894px" width="10" height="10" viewBox="0 0 10 10"><path d="M6 4l3 3 3-3" fill="none" stroke="#444" stroke-width="1.200"/></svg>
<div class="pill" style="left:333px;width:93px"></div>
<div class="abs" style="left:372px;top:160px;width:1px;height:29px;background:#e9e9ec"></div>
<div class="t" style="left:340.94px;top:167.64px;font-size:12px;color:#8b93a2;letter-spacing:-0.180px;">Host</div>
<div class="t" style="left:380.83px;top:166.95px;font-size:14px;color:#8b93a2;transform:scaleX(1.0463);transform-origin:0 0;">#3</div>
<svg style="left:405px;top:171px" width="10" height="8" viewBox="0 0 10 8"><path d="M2.200 2.600L5 5.400l2.800-2.800" fill="none" stroke="#4a4f57" stroke-width="1.400" stroke-linecap="round" stroke-linejoin="round"/></svg>
<div class="pill" style="left:1498px;width:174px"></div>
<div class="abs" style="left:1641px;top:160px;width:1px;height:29px;background:#c9ccd6"></div>
<svg style="left:1505px;top:167px" width="16" height="16" viewBox="0 0 16 16"><circle cx="8" cy="8" r="6" fill="none" stroke="#8b93a2" stroke-width="1.300"/><path d="M8 4.600V8.200H5.600" fill="none" stroke="#8b93a2" stroke-width="1.300" stroke-linecap="round"/></svg>
<div class="t" style="left:1527.57px;top:166.73px;font-size:14.5px;color:#8b93a2;transform:scaleX(0.8851);transform-origin:0 0;">Last 12 hours</div>
<svg style="left:1620px;top:171px" width="10" height="8" viewBox="0 0 10 8"><path d="M2.400 2.800L5 5.400l2.600-2.600" fill="none" stroke="#8b93a2" stroke-width="1.300" stroke-linecap="round" stroke-linejoin="round"/></svg>
<svg style="left:1648px;top:166px" width="18" height="18" viewBox="0 0 18 18"><circle cx="8" cy="8.200" r="5.700" fill="none" stroke="#8b93a2" stroke-width="1.300"/><path d="M5.300 8.200h5.400M12.200 12.400l3 2.800" fill="none" stroke="#8b93a2" stroke-width="1.300" stroke-linecap="round"/></svg>
<div class="pill" style="left:1679px;width:116px"></div>
<div class="abs" style="left:1765px;top:160px;width:1px;height:29px;background:#c9ccd6"></div>
<svg style="left:1687px;top:166px" width="17" height="17" viewBox="0 0 17 17" fill="none" stroke="#8b93a2" stroke-width="1.300" stroke-linecap="round" stroke-linejoin="round">
<path d="M13.800 7.200A5.600 5.600 0 0 0 3.600 5.200"/><path d="M3.200 2.400v3h3"/><path d="M3.200 9.800a5.600 5.600 0 0 0 10.200 2"/><path d="M13.800 14.600v-3h-3"/></svg>
<div class="t" style="left:1710.64px;top:166.73px;font-size:14.5px;color:#8b93a2;transform:scaleX(0.9147);transform-origin:0 0;">Refresh</div>
<svg style="left:1775px;top:171px" width="10" height="8" viewBox="0 0 10 8"><path d="M2.400 2.800L5 5.400l2.600-2.600" fill="none" stroke="#8b93a2" stroke-width="1.300" stroke-linecap="round" stroke-linejoin="round"/></svg>
<div class="card" style="left:333px;top:239px;width:480.5px;height:93.500px"></div>
<div class="t" style="left:349.15px;top:257.05px;font-size:14px;color:#a3acb9;transform:scaleX(0.9343);transform-origin:0 0;-webkit-text-stroke:0.45px #a3acb9;">GPU Name</div>
<div class="t" style="left:348.20px;top:283.21px;font-size:30px;color:#464b54;letter-spacing:0.480px;-webkit-text-stroke:0.7px #464b54;">NVIDIA GeForce RTX 4070 Ti</div>
<div class="card" style="left:823px;top:239px;width:296.5px;height:93.500px"></div>
<div class="t" style="left:839.13px;top:257.05px;font-size:14px;color:#a3acb9;letter-spacing:-0.308px;-webkit-text-stroke:0.45px #a3acb9;">VBIOS Version</div>
<div class="t" style="left:838.34px;top:283.21px;font-size:30px;color:#464b54;transform:scaleX(1.0816);transform-origin:0 0;-webkit-text-stroke:0.7px #464b54;">95.04.3c.c0.d6</div>
<div class="card" style="left:1129px;top:239px;width:174px;height:93.500px"></div>
<div class="t" style="left:1144.28px;top:257.05px;font-size:14px;color:#a3acb9;letter-spacing:0.232px;-webkit-text-stroke:0.45px #a3acb9;">Driver Version</div>
<div class="t" style="left:1144.74px;top:283.21px;font-size:30px;color:#464b54;transform:scaleX(1.0542);transform-origin:0 0;-webkit-text-stroke:0.7px #464b54;">581.80</div>
<div class="card" style="left:1312px;top:239px;width:481px;height:93.500px"></div>
<div class="t" style="left:1328.25px;top:257.05px;font-size:14px;color:#a3acb9;transform:scaleX(0.9317);transform-origin:0 0;-webkit-text-stroke:0.45px #a3acb9;">CPU Name</div>
<div class="t" style="left:1326.65px;top:283.21px;font-size:30px;color:#464b54;letter-spacing:0.645px;-webkit-text-stroke:0.7px #464b54;">13th Gen Intel Core i7-13700KF</div>
<div class="card" style="left:333px;top:342px;width:602.500px;height:400.500px"></div>
<div class="card" style="left:945px;top:342px;width:602.500px;height:400.500px"></div>
<div class="card" style="left:1558px;top:342px;width:235px;height:400.500px"></div>
<div class="card" style="left:333px;top:752.500px;width:235.500px;height:156px;border-radius:14px 14px 0 0"></div>
<div class="card" style="left:578px;top:752.500px;width:297px;height:156px;border-radius:14px 14px 0 0"></div>
<div class="card" style="left:884px;top:752.500px;width:297px;height:156px;border-radius:14px 14px 0 0"></div>
<div class="card" style="left:1190px;top:752.500px;width:603px;height:156px;border-radius:14px 14px 0 0"></div>
<svg style="left:0;top:0" width="1816" height="944" viewBox="0 0 1816 944">
<defs>
<linearGradient id="gG" gradientUnits="userSpaceOnUse" x1="0" y1="512" x2="0" y2="698"><stop offset="0" stop-color="#c6ee5c" stop-opacity=".9"/><stop offset=".4" stop-color="#d4ee62" stop-opacity=".62"/><stop offset=".56" stop-color="#e0ed64" stop-opacity=".54"/><stop offset="1" stop-color="#e4f080" stop-opacity=".03"/></linearGradient>
<linearGradient id="gY" gradientUnits="userSpaceOnUse" x1="0" y1="525" x2="0" y2="698"><stop offset="0" stop-color="#f5c043" stop-opacity=".45"/><stop offset=".47" stop-color="#f4c648" stop-opacity=".3"/><stop offset=".53" stop-color="#f2cc50" stop-opacity=".08"/><stop offset="1" stop-color="#f2d050" stop-opacity="0"/></linearGradient>
<linearGradient id="gR" gradientUnits="userSpaceOnUse" x1="0" y1="566" x2="0" y2="650"><stop offset="0" stop-color="#dcec6a" stop-opacity=".5"/><stop offset=".6" stop-color="#e0ee70" stop-opacity=".2"/><stop offset="1" stop-color="#e0ee70" stop-opacity="0"/></linearGradient>
<linearGradient id="gM" gradientUnits="userSpaceOnUse" x1="0" y1="434" x2="0" y2="698"><stop offset="0" stop-color="#d1f376" stop-opacity=".97"/><stop offset=".5" stop-color="#d6f08a" stop-opacity=".6"/><stop offset="1" stop-color="#e0f0a0" stop-opacity=".04"/></linearGradient>
</defs>
<path d="M391.3,698.2H897.6M391.3,641.7H897.6M391.3,585.1H897.6M391.3,528.6H897.6M391.3,472H897.6M391.3,415.5H897.6M391.3,415.5V698.2M430,415.5V698.2M472.1,415.5V698.2M514.2,415.5V698.2M556.4,415.5V698.2M598.5,415.5V698.2M640.6,415.5V698.2M682.7,415.5V698.2M724.8,415.5V698.2M767,415.5V698.2M809.1,415.5V698.2M851.2,415.5V698.2M893.3,415.5V698.2M897.6,415.5V698.2" stroke="#e3e3e3" stroke-width="1" stroke-dasharray="1 1" fill="none" shape-rendering="crispEdges"/>
<path d="M391.3,698.500H897.6" stroke="#d0d0d0" stroke-width="1"/>
<path d="M391.3,618.5L392.3,618.5L393.3,618.5L394.3,618.5L395.3,618.5L396.3,618.5L397.3,618.5L398.3,618.5L399.3,618.5L400.3,618.5L401.3,618.5L402.3,618.5L403.3,618.5L404.3,618.5L405.3,618.5L406.3,618.5L407.3,618.5L408.3,618.5L409.3,618.5L410.3,618.5L411.3,618.5L412.3,618.5L413.3,618.5L414.3,618.5L415.3,618.5L416.3,618.5L417.3,618.5L418.3,618.5L419.3,618.5L420.3,618.5L421.3,618.5L422.3,618.5L423.3,618.5L424.3,618.5L425.3,618.5L426.3,618.5L427.3,618.5L428.3,618.5L429.3,618.5L430.3,618.5L431.3,618.5L432.3,618.5L433.3,618.5L434.3,618.5L435.3,618.5L436.3,618.5L437.3,618.5L438.3,618.5L439.3,618.5L440.3,618.5L441.3,618.5L442.3,618.5L443.3,618.5L444.3,618.5L445.3,618.5L446.3,618.5L447.3,618.5L448.3,618.5L449.3,618.5L450.3,618.5L451.3,618.5L452.3,618.5L453.3,618.5L454.3,618.5L455.3,618.5L456.3,618.5L457.3,618.5L458.3,618.5L459.3,618.5L460.3,618.5L461.3,618.5L462.3,618.5L463.3,618.5L464.3,618.5L465.3,618.5L466.3,618.5L467.3,618.5L468.3,618.5L469.3,618.5L470.3,618.5L471.3,618.5L472.3,618.5L473.3,618.5L474.3,618.5L475.3,618.5L476.3,618.5L477.3,618.5L478.3,618.5L479.3,618.5L480.3,618.5L481.3,618.5L482.3,618.5L483.3,618.5L484.3,618.5L485.3,618.5L486.3,618.5L487.3,618.5L488.3,618.5L489.3,618.5L490.3,618.5L491.3,618.5L492.3,618.5L493.3,618.5L494.3,618.5L495.3,618.5L496.3,618.5L497.3,618.5L498.3,618.5L499.3,618.5L500.3,618.5L501.3,618.5L502.3,618.5L503.3,618.5L504.3,618.5L505.3,618.5L506.3,618.5L507.3,618.5L508.3,618.5L509.3,618.5L510.3,618.5L511.3,618.5L512.3,618.5L513.3,618.5L514.3,618.5L515.3,618.5L516.3,618.5L517.3,618.5L518.3,618.5L519.3,618.5L520.3,618.5L521.3,618.5L522.3,618.5L523.3,618.5L524.3,618.5L525.3,618.5L526.3,618.5L527.3,618.5L528.3,618.5L529.3,618.5L530.3,618.5L531.3,618.5L532.3,618.5L533.3,618.5L534.3,618.5L535.3,618.5L536.3,618.5L537.3,618.5L538.3,618.5L539.3,618.5L540.3,618.5L541.3,618.5L542.3,618.5L543.3,618.5L544.3,618.5L545.3,618.5L546.3,618.5L547.3,618.5L548.3,618.5L549.3,618.5L550.3,618.5L551.3,618.5L552.3,618.5L553.3,618.5L554.3,618.5L555.3,618.5L556.3,618.5L557.3,618.5L558.3,618.5L559.3,618.5L560.3,618.5L561.3,618.5L562.3,618.5L563.3,618.5L564.3,618.5L565.3,618.5L566.3,618.5L567.3,618.5L568.3,618.5L569.3,618.5L570.3,618.5L571.3,618.5L572.3,618.5L573.3,618.5L574.3,618.5L575.3,618.5L576.3,618.5L577.3,618.5L578.3,618.5L579.3,618.5L580.3,618.5L581.3,618.5L582.3,618.5L583.3,618.5L584.3,618.5L585.3,618.5L586.3,618.5L587.3,618.5L588.3,618.5L589.3,618.5L590.3,618.5L591.3,618.5L592.3,618.5L593.3,618.5L594.3,618.5L595.3,618.5L596.3,618.5L597.3,618.5L598.3,618.5L599.3,618.5L600.3,618.5L601.3,618.5L602.3,618.5L603.3,618.5L604.3,618.5L605.3,618.5L606.3,618.5L607.3,618.5L608.3,618.5L609.3,618.5L610.3,618.5L611.3,618.5L612.3,618.5L613.3,618.5L614,618.5L614.3,617.7L615,615.9L615.3,615.9L616.3,615.9L617.3,615.9L618.3,615.9L619.3,615.9L620.3,615.9L621.3,615.9L622.3,615.9L623.3,615.9L624.3,615.9L625.3,615.9L626.3,615.9L627.3,615.9L628.3,615.9L629.3,615.9L630.3,615.9L631.3,615.9L632.3,615.9L633.3,615.9L634.3,615.9L635.3,615.9L636.3,615.9L637.3,615.9L638.3,615.9L639.3,615.9L640.3,615.9L641.3,615.9L642.3,615.9L643.3,615.9L644.3,615.9L645.3,615.9L646.3,615.9L647.3,615.9L648.3,615.9L649.3,615.9L650.3,615.9L651.3,615.9L652.3,615.9L653.3,615.9L654.3,615.9L655.3,615.9L656.3,615.9L657.3,615.9L658.3,615.9L659.3,615.9L660.3,615.9L661.3,615.9L662.3,615.9L663.3,615.9L664.3,615.9L665.3,615.9L666.3,615.9L667.3,615.9L668.3,615.9L669.3,615.9L670.3,615.9L671.3,615.9L672.3,615.9L673.3,615.9L674.3,615.9L675.3,615.9L676.3,615.9L677.3,615.9L678.3,615.9L679.3,615.9L680.3,615.9L681.3,615.9L682.3,615.9L683.3,615.9L684.3,615.9L685.3,615.9L686.3,615.9L687.3,615.9L688.3,615.9L689.3,615.9L690.3,615.9L691.3,615.9L692.3,615.9L693.3,615.9L694.3,615.9L695.3,615.9L696.3,615.9L697.3,615.9L698.3,615.9L699.3,615.9L700.3,615.9L701.3,615.9L702.3,615.9L703.3,615.9L704.3,615.9L704.5,615.9L705.3,599.5L706,585.1L706.3,578.3L707.3,555.7L708,539.9L708.3,535.4L709.3,520.3L709.5,517.3L710.3,528.6L711,531.4L711.3,528L712.3,516.7L712.5,514.4L713.3,534.2L714.2,545.5L714.3,544.9L715.3,538.4L715.5,537.1L716.3,541.6L716.5,542.7L717.3,534.2L718.3,523.6L718.5,521.5L719.3,531.7L719.5,534.2L720.3,537.2L721,539.9L721.3,537.3L722,531.4L722.3,527.6L723,518.7L723.3,518.4L724.3,517.5L724.5,517.3L725.2,531.4L725.3,531.9L726,535.6L726.3,534.2L727.3,529.5L727.5,528.6L728.3,521.8L729.3,513.3L729.5,511.6L730.3,522.9L731,525.8L731.3,524.1L732.3,518.4L732.5,517.3L733.2,556.9L733.3,560.4L734,585.1L734.3,588.9L735.3,601.7L736,610.6L736.3,611.3L737.3,613.9L738,615.7L738.3,615.7L739.3,615.9L740.3,616.1L741,616.2L741.3,616.2L742.3,616.2L743.3,616.2L744.3,616.2L745.3,616.2L746.3,616.2L747.3,616.2L748.3,616.2L749.3,616.2L750.3,616.2L751.3,616.2L752.3,616.2L753.3,616.2L754.3,616.2L755.3,616.2L756.3,616.2L757.3,616.2L758.3,616.2L759.3,616.2L760.3,616.2L761.3,616.2L762.3,616.2L763.3,616.2L764.3,616.2L765.3,616.2L766.3,616.2L767.3,616.2L768.3,616.2L769.3,616.2L770.3,616.2L771.3,616.2L772.3,616.2L773.3,616.2L774.3,616.2L775.3,616.2L776.3,616.2L777.3,616.2L778.3,616.2L779.3,616.2L780.3,616.2L781.3,616.2L782.3,616.2L783.3,616.2L784.3,616.2L785.3,616.2L786.3,616.2L787.3,616.2L788.3,616.2L789.3,616.2L790.3,616.2L791.3,616.2L792.3,616.2L793.3,616.2L794.3,616.2L795.3,616.2L796.3,616.2L797.3,616.2L798.3,616.2L799.3,616.2L800.3,616.2L801.3,616.2L802.3,616.2L803.3,616.2L804,616.2L804.3,615.7L805,614.5L805.3,614.5L806.3,614.5L807.3,614.5L808.3,614.5L809.3,614.5L810.3,614.5L811.3,614.5L812.3,614.5L813.3,614.5L814.3,614.5L815.3,614.5L816.3,614.5L817.3,614.5L818.3,614.5L819.3,614.5L820.3,614.5L821.3,614.5L822.3,614.5L823.3,614.5L824.3,614.5L825.3,614.5L826.3,614.5L827,614.5L827.3,615L828,616.2L828.3,616.2L829.3,616.2L830.3,616.2L831.3,616.2L832.3,616.2L833.3,616.2L834.3,616.2L835.3,616.2L836.3,616.2L837.3,616.2L838.3,616.2L839.3,616.2L840.3,616.2L841.3,616.2L842.3,616.2L843.3,616.2L844.3,616.2L845.3,616.2L846.3,616.2L847.3,616.2L848.3,616.2L849.3,616.2L850.3,616.2L851.3,616.2L852.3,616.2L853.3,616.2L854.3,616.2L855.3,616.2L856.3,616.2L857.3,616.2L858.3,616.2L859.3,616.2L860.3,616.2L861.3,616.2L862.3,616.2L863.3,616.2L864.3,616.2L865.3,616.2L866.3,616.2L867.3,616.2L868.3,616.2L869.3,616.2L870.3,616.2L871.3,616.2L872.3,616.2L873.3,616.2L874.3,616.2L875.3,616.2L876.3,616.2L877.3,616.2L878.3,616.2L879.3,616.2L880.3,616.2L881.3,616.2L882.3,616.2L883.3,616.2L884.3,616.2L885.3,616.2L886.3,616.2L887.3,616.2L888.3,616.2L889.3,616.2L890.3,616.2L891.3,616.2L892.3,616.2L893.3,616.2L894.3,616.2L895.3,616.2L896.3,616.2L897.3,616.2L897.6,616.2L897.6,698.2L391.3,698.2Z" fill="url(#gG)"/>
<path d="M391.3,612.9L392.3,611.5L393.3,612.3L394.3,611.2L395.3,611.1L396.3,613.7L397.3,613.9L398.3,610.2L399.3,612.8L400.3,612.9L401.3,609.5L402.3,611.8L403.3,610.2L404.3,611.8L405.3,611.1L406.3,613.3L407.3,611.1L408.3,610.1L409.3,611.6L410.3,610.6L411.3,610.9L412.3,613.7L413.3,610.6L414.3,611.3L415.3,612.6L416.3,613.8L417.3,610.1L418.3,611.9L419.3,610.7L420.3,610L421.3,610.8L422.3,609.8L423.3,612.2L424.3,610.4L425.3,612L426.3,609.8L427.3,610L428.3,613.6L429.3,613.4L430.3,613L431.3,609.6L432.3,612L433.3,611.2L434.3,612.6L435.3,611.7L436.3,608L437.3,612.4L438.3,611.4L439.3,611.4L440.3,609.9L441.3,610.9L442.3,609.8L443.3,610.1L444.3,609.5L445.3,611L446.3,613.3L447.3,610.1L448.3,609.7L449.3,609.9L450.3,611.5L451.3,610.8L452.3,613.1L453.3,610.3L454.3,611.4L455.3,612.7L456.3,613.8L457.3,610.2L458.3,609.6L459.3,613.6L460.3,610.4L461.3,612.2L462.3,613.4L463.3,612.7L464.3,610.6L465.3,610.1L466.3,613.9L467.3,611.3L468.3,613.9L469.3,610.8L470.3,612.6L471.3,610.1L472.3,609.6L473.3,611.8L474.3,609.5L475.3,612.7L476.3,613.7L477.3,611.4L478.3,613.9L479.3,613.2L480.3,612.2L481.3,611.3L482.3,613.4L483.3,613.9L484.3,610.1L485.3,612.7L486.3,609.7L487.3,610L488.3,612.4L489.3,612L490.3,611.7L491.3,611.2L492.3,611.4L493.3,611.6L494.3,611.3L495.3,609.8L496.3,611.8L497.3,612.1L498.3,610.8L499.3,613L500.3,612.7L501.3,609.7L502.3,611.7L503.3,611.6L504.3,614L505.3,612.2L506.3,611.5L507.3,614L508.3,611.3L509.3,611.2L510.3,613.8L511.3,611.3L512.3,612L513.3,611L514.3,612.5L515.3,610.9L516.3,610.8L517.3,614L518.3,613.8L519.3,611.1L520.3,609.8L521.3,613L522.3,612.1L523.3,611.4L524.3,612.7L525.3,612.5L526.3,612.7L527.3,612.5L528.3,611.4L529.3,612.8L530.3,612.4L531.3,610.6L532.3,614L533.3,611.6L534.3,610.8L535.3,612.7L536.3,613.1L537.3,610.5L538.3,613.1L539.3,613.3L540.3,612.2L541.3,611L542.3,613.7L543.3,612.7L544.3,612.6L545.3,610.4L546.3,612.2L547.3,610.3L548.3,613.4L549.3,612.6L550.3,611.2L551.3,610.2L552.3,612.1L553.3,613.1L554.3,613.6L555.3,611.8L556.3,613.3L557.3,610.5L558.3,610.4L559.3,613.3L560.3,612.9L561.3,610.5L562.3,611.3L563.3,610.5L564.3,612.6L565.3,613.6L566.3,612.9L567.3,610.6L568.3,613L569.3,612.6L570.3,612.3L571.3,612.3L572.3,612.3L573.3,610L574.3,613.5L575.3,614.2L576.3,609.9L577.3,610.2L578.3,609.7L579.3,612.2L580.3,609.9L581.3,610L582.3,613.2L583.3,610.8L584.3,610.4L585.3,611.2L586.3,611.9L587.3,612.9L588.3,612.7L589.3,613.2L590.3,613.9L591.3,611.5L592.3,612.9L593.3,610.5L594.3,614L595.3,610.1L596.3,611.1L597.3,610L598.3,610.2L599.3,610.2L600.3,611.6L601.3,614.2L602.3,610.9L603.3,613.4L604.3,612.9L605.3,611.2L606.3,611.9L607.3,612.4L608.3,610L609.3,611.5L610.3,612.7L611.3,613.1L612.3,611.2L613.3,612.3L614.3,611.5L615.3,614.8L616.3,622.4L617.3,623L618.3,622.2L619.3,624.1L620.3,622.5L621.3,622.2L622.3,622.6L623.3,622.6L624.3,623.3L625.3,616.1L626.3,610.1L627.3,611.2L628.3,610.6L629.3,610.5L630.3,609.7L631.3,610L632.3,609.8L633.3,608.9L634.3,611.1L635.3,610.9L636.3,610.6L637.3,610.6L638.3,610.7L639.3,610.1L640.3,617.3L641.3,624.2L642.3,623.1L643.3,623.7L644.3,623.7L645.3,623.7L646.3,622.9L647.3,623.1L648.3,623.8L649.3,624.3L650.3,610.6L651.3,622.8L652.3,615.7L653.3,611.1L654.3,612.2L655.3,613.1L656.3,613L657.3,612.5L658.3,613.6L659.3,618.4L660.3,623.3L661.3,622.2L662.3,622.7L663.3,623.2L664.3,621.3L665.3,614L666.3,608.6L667.3,609.4L668.3,608.7L669.3,609.4L670.3,610L671.3,609.2L672.3,608.8L673.3,610.6L674.3,617.2L675.3,623.8L676.3,622.6L677.3,622.5L678.3,624.1L679.3,622.7L680.3,623.1L681.3,624.6L682.3,624.1L683.3,625.2L684.3,621L685.3,614.1L686.3,608.4L687.3,608.7L688.3,609.1L689.3,608.9L690.3,609.5L691.3,610.8L692.3,609.5L693.3,611.2L694.3,610.9L695.3,609.1L696.3,611.2L697.3,613.6L698.3,621.9L699.3,621.6L700.3,623.8L701.3,624.5L702.3,622.4L703.3,620.9L704.3,606.4L705.3,588.3L706.3,580.1L707.3,567L708.3,558.6L709.3,557.8L710.3,557.1L711.3,550.7L712.3,552.6L713.3,554.1L714.3,551.3L715.3,548.9L716.3,549.5L717.3,546.5L718.3,547L719.3,548.6L720.3,549.3L721.3,548.5L722.3,543.6L723.3,546.4L724.3,546.6L725.3,544.3L726.3,544.3L727.3,543.9L728.3,536.5L729.3,530.8L730.3,527.2L731.3,524.7L732.3,530L733.3,561.3L734.3,590.8L735.3,607.3L736.3,612L737.3,616.6L738.3,618.1L739.3,619.6L740.3,619.1L741.3,615L742.3,608.1L743.3,609.6L744.3,609.1L745.3,609.7L746.3,616.7L747.3,620.8L748.3,620.9L749.3,624L750.3,624.1L751.3,623.7L752.3,622.4L753.3,620.4L754.3,615.8L755.3,612.7L756.3,609.8L757.3,608.7L758.3,606.8L759.3,604.9L760.3,607.2L761.3,606.3L762.3,608.1L763.3,607.1L764.3,605.2L765.3,607.5L766.3,604L767.3,603.9L768.3,607.6L769.3,603.8L770.3,606.3L771.3,604.5L772.3,604.6L773.3,606.7L774.3,605L775.3,605.1L776.3,604.4L777.3,606.8L778.3,604.6L779.3,603.7L780.3,605L781.3,605.6L782.3,607.5L783.3,605.8L784.3,606.5L785.3,604.8L786.3,605L787.3,605.5L788.3,607.2L789.3,605.1L790.3,605.2L791.3,607.3L792.3,597.6L793.3,605.1L794.3,607.5L795.3,603.9L796.3,607.4L797.3,606.6L798.3,604.8L799.3,589.1L800.3,605.6L801.3,605.2L802.3,606L803.3,606.7L804.3,607.3L805.3,607.8L806.3,604.9L807.3,604.7L808.3,605.7L809.3,604.8L810.3,606.5L811.3,606.9L812.3,606.4L813.3,604.2L814.3,607.9L815.3,605.8L816.3,607L817.3,604.7L818.3,606.5L819.3,606.6L820.3,606.3L821.3,605.7L822.3,604.6L823.3,606.5L824.3,604.3L825.3,607.6L826.3,606.9L827.3,607.7L828.3,607.6L829.3,604.6L830.3,604.9L831.3,607.3L832.3,607.3L833.3,606.3L834.3,596.4L835.3,604.5L836.3,604.8L837.3,595.9L838.3,607.5L839.3,606.4L840.3,607.3L841.3,591.9L842.3,605.6L843.3,607.3L844.3,597.8L845.3,604.7L846.3,608.1L847.3,595.9L848.3,595.9L849.3,603.9L850.3,606.5L851.3,605.7L852.3,605.6L853.3,605.3L854.3,603.8L855.3,605.1L856.3,606.9L857.3,604.3L858.3,606L859.3,605.5L860.3,604.9L861.3,608.2L862.3,604.7L863.3,605.2L864.3,606L865.3,605.9L866.3,606.2L867.3,607.4L868.3,605.8L869.3,608.1L870.3,606L871.3,605.3L872.3,606.2L873.3,605.7L874.3,603.9L875.3,595.3L876.3,595.3L877.3,604.7L878.3,605.4L879.3,608L880.3,606.6L881.3,607.2L882.3,607.9L883.3,605.8L884.3,604.1L885.3,606.8L886.3,604.3L887.3,605.1L888.3,607.7L889.3,604.4L890.3,605.6L891.3,604.1L892.3,605.1L893.3,604.9L894.3,606.7L895.3,604.6L896.3,603.2L897.3,604.4L897.6,606.3L897.6,698.2L391.3,698.2Z" fill="url(#gY)"/>
<path d="M391.3,616.5L392.3,616.5L393.3,616.5L394.3,616.5L395.3,616.5L396.3,616.5L397.3,616.5L398.3,616.5L399.3,616.5L400.3,617.5L401.3,617.5L402.3,616.5L403.3,616.5L404.3,616.5L405.3,617.5L406.3,617.5L407.3,617.5L408.3,617.5L409.3,616.5L410.3,616.5L411.3,616.5L412.3,616.5L413.3,616.5L414.3,616.5L415.3,616.5L416.3,616.5L417.3,616.5L418.3,617.5L419.3,617.5L420.3,616.5L421.3,616.5L422.3,616.5L423.3,617.5L424.3,617.5L425.3,617.5L426.3,617.5L427.3,616.5L428.3,616.5L429.3,616.5L430.3,616.5L431.3,616.6L432.3,616.6L433.3,616.6L434.3,616.6L435.3,616.6L436.3,616.6L437.3,616.6L438.3,616.6L439.3,616.6L440.3,616.6L441.3,616.6L442.3,616.6L443.3,616.6L444.3,616.6L445.3,617.6L446.3,617.6L447.3,616.6L448.3,616.6L449.3,616.6L450.3,617.6L451.3,617.6L452.3,617.6L453.3,617.6L454.3,616.6L455.3,616.6L456.3,616.6L457.3,616.6L458.3,616.6L459.3,616.6L460.3,616.6L461.3,616.6L462.3,616.6L463.3,617.6L464.3,617.6L465.3,616.6L466.3,616.6L467.3,616.6L468.3,617.6L469.3,617.6L470.3,617.6L471.3,617.6L472.3,616.6L473.3,616.6L474.3,616.6L475.3,616.6L476.3,616.6L477.3,616.6L478.3,616.6L479.3,616.6L480.3,616.6L481.3,616.6L482.3,616.6L483.3,616.6L484.3,616.6L485.3,616.6L486.3,616.6L487.3,616.6L488.3,616.6L489.3,616.6L490.3,617.6L491.3,617.6L492.3,616.6L493.3,616.6L494.3,616.6L495.3,617.6L496.3,617.6L497.3,617.6L498.3,617.6L499.3,616.6L500.3,616.6L501.3,616.6L502.3,616.6L503.3,616.6L504.3,616.6L505.3,616.6L506.3,616.6L507.3,616.6L508.3,617.6L509.3,617.6L510.3,616.7L511.3,616.7L512.3,616.7L513.3,617.6L514.3,617.6L515.3,617.6L516.3,617.6L517.3,616.7L518.3,616.7L519.3,616.7L520.3,616.7L521.3,616.7L522.3,616.7L523.3,616.7L524.3,616.7L525.3,616.7L526.3,616.7L527.3,616.7L528.3,616.7L529.3,616.7L530.3,616.7L531.3,616.7L532.3,616.7L533.3,616.7L534.3,616.7L535.3,617.7L536.3,617.7L537.3,616.7L538.3,616.7L539.3,616.7L540.3,617.7L541.3,617.7L542.3,617.7L543.3,617.7L544.3,616.7L545.3,616.7L546.3,616.7L547.3,616.7L548.3,616.7L549.3,616.7L550.3,616.7L551.3,616.7L552.3,616.7L553.3,617.7L554.3,617.7L555.3,616.7L556.3,616.7L557.3,616.7L558.3,617.7L559.3,617.7L560.3,617.7L561.3,617.7L562.3,616.7L563.3,616.7L564.3,616.7L565.3,616.7L566.3,616.7L567.3,616.7L568.3,616.7L569.3,616.7L570.3,616.7L571.3,616.7L572.3,616.7L573.3,616.7L574.3,616.7L575.3,616.7L576.3,616.7L577.3,616.7L578.3,616.7L579.3,616.7L580.3,617.7L581.3,617.7L582.3,616.7L583.3,616.7L584.3,616.7L585.3,617.7L586.3,617.7L587.3,617.7L588.3,617.7L589.3,616.8L590.3,616.8L591.3,616.8L592.3,616.8L593.3,616.8L594.3,616.8L595.3,616.8L596.3,616.8L597.3,616.8L598.3,617.8L599.3,617.8L600.3,616.8L601.3,616.8L602.3,616.8L603.3,617.8L604.3,617.8L605.3,617.8L606.3,617.8L607.3,616.8L608.3,616.8L609.3,616.8L610.3,616.8L611.3,616.8L612.3,616.8L613.3,616.7L614.3,616.6L615.3,617.1L616.3,618.9L617.3,620.2L618.3,620.2L619.3,620.2L620.3,620.2L621.3,620.2L622.3,620.2L623.3,620.2L624.3,619.5L625.3,617.4L626.3,615.2L627.3,613.7L628.3,613.7L629.3,613.7L630.3,613.7L631.3,613.7L632.3,613.7L633.3,613.7L634.3,613.7L635.3,613.7L636.3,613.7L637.3,613.7L638.3,613.7L639.3,614.6L640.3,617.5L641.3,619.6L642.3,619.6L643.3,619.6L644.3,619.6L645.3,619.6L646.3,619.6L647.3,619.6L648.3,619.6L649.3,619.6L650.3,619.6L651.3,618.8L652.3,616.3L653.3,614.5L654.3,614.5L655.3,614.5L656.3,614.5L657.3,614.5L658.3,615.3L659.3,617.8L660.3,619.6L661.3,619.6L662.3,619.6L663.3,619.6L664.3,618.7L665.3,615.6L666.3,613.4L667.3,613.4L668.3,613.4L669.3,613.4L670.3,613.4L671.3,613.4L672.3,613.4L673.3,613.4L674.3,616.4L675.3,619L676.3,619L677.3,619L678.3,619L679.3,619L680.3,619L681.3,619L682.3,619L683.3,619L684.3,618.2L685.3,615.4L686.3,613.4L687.3,613.4L688.3,613.4L689.3,613.4L690.3,613.4L691.3,613.4L692.3,613.4L693.3,613.4L694.3,613.4L695.3,613.4L696.3,613.4L697.3,614.4L698.3,617.8L699.3,618.5L700.3,618.5L701.3,618.5L702.3,618.5L703.3,617.3L704.3,613.3L705.3,607.3L706.3,597.6L707.3,588.7L708.3,584L709.3,579.4L710.3,576.2L711.3,574.8L712.3,573L713.3,572.7L714.3,572.1L715.3,571.3L716.3,570.9L717.3,570.9L718.3,571L719.3,569.5L720.3,569.4L721.3,569.9L722.3,569.5L723.3,569.1L724.3,568L725.3,568.6L726.3,568L727.3,567.8L728.3,566.5L729.3,566.7L730.3,566.1L731.3,565.2L732.3,565.8L733.3,570.6L734.3,580.9L735.3,592.7L736.3,599L737.3,604.3L738.3,607L739.3,609.8L740.3,611.7L741.3,611.5L742.3,611.4L743.3,611.2L744.3,611.1L745.3,610.9L746.3,611.8L747.3,615.1L748.3,617.5L749.3,617.9L750.3,618.3L751.3,618.7L752.3,618.4L753.3,616.1L754.3,614.3L755.3,613.5L756.3,612.8L757.3,612.2L758.3,612L759.3,611.9L760.3,611.7L761.3,611.5L762.3,611.3L763.3,611.1L764.3,611L765.3,610.8L766.3,610.7L767.3,610.6L768.3,610.4L769.3,610.3L770.3,610.2L771.3,610.1L772.3,610L773.3,610L774.3,610L775.3,610L776.3,610L777.3,610L778.3,610L779.3,610L780.3,610L781.3,610L782.3,610L783.3,610L784.3,610L785.3,610L786.3,610L787.3,610L788.3,610L789.3,610L790.3,610L791.3,610L792.3,610L793.3,610L794.3,610L795.3,610L796.3,610L797.3,610L798.3,610L799.3,610L800.3,610L801.3,610L802.3,609.9L803.3,609.9L804.3,609.9L805.3,609.8L806.3,609.8L807.3,609.8L808.3,609.8L809.3,609.7L810.3,609.7L811.3,609.7L812.3,609.6L813.3,609.6L814.3,609.6L815.3,609.6L816.3,609.5L817.3,609.5L818.3,609.5L819.3,609.5L820.3,609.4L821.3,609.4L822.3,609.4L823.3,609.3L824.3,609.3L825.3,609.3L826.3,609.3L827.3,609.2L828.3,609.2L829.3,609.2L830.3,609.1L831.3,609.1L832.3,609.1L833.3,609.1L834.3,609.1L835.3,609.1L836.3,609.1L837.3,609.1L838.3,609.1L839.3,609.1L840.3,609.1L841.3,609.1L842.3,609.1L843.3,609.1L844.3,609L845.3,609L846.3,609L847.3,609L848.3,609L849.3,609L850.3,609L851.3,609L852.3,609L853.3,609L854.3,609L855.3,609L856.3,609L857.3,609L858.3,608.9L859.3,608.9L860.3,608.9L861.3,608.9L862.3,608.9L863.3,608.9L864.3,608.9L865.3,608.9L866.3,608.9L867.3,608.9L868.3,608.9L869.3,608.9L870.3,608.9L871.3,609.1L872.3,609.2L873.3,609.3L874.3,609.5L875.3,609.6L876.3,609.8L877.3,609.9L878.3,610L879.3,610.2L880.3,610.3L881.3,610.3L882.3,610.3L883.3,610.3L884.3,610.3L885.3,610.4L886.3,610.4L887.3,610.4L888.3,610.4L889.3,610.4L890.3,610.4L891.3,610.5L892.3,610.5L893.3,610.5L894.3,610.5L895.3,610.5L896.3,610.5L897.3,610.6L897.6,610.6L897.6,698.2L391.3,698.2Z" fill="url(#gR)"/>
<path d="M391.3,618.5L392.3,618.5L393.3,618.5L394.3,618.5L395.3,618.5L396.3,618.5L397.3,618.5L398.3,618.5L399.3,618.5L400.3,618.5L401.3,618.5L402.3,618.5L403.3,618.5L404.3,618.5L405.3,618.5L406.3,618.5L407.3,618.5L408.3,618.5L409.3,618.5L410.3,618.5L411.3,618.5L412.3,618.5L413.3,618.5L414.3,618.5L415.3,618.5L416.3,618.5L417.3,618.5L418.3,618.5L419.3,618.5L420.3,618.5L421.3,618.5L422.3,618.5L423.3,618.5L424.3,618.5L425.3,618.5L426.3,618.5L427.3,618.5L428.3,618.5L429.3,618.5L430.3,618.5L431.3,618.5L432.3,618.5L433.3,618.5L434.3,618.5L435.3,618.5L436.3,618.5L437.3,618.5L438.3,618.5L439.3,618.5L440.3,618.5L441.3,618.5L442.3,618.5L443.3,618.5L444.3,618.5L445.3,618.5L446.3,618.5L447.3,618.5L448.3,618.5L449.3,618.5L450.3,618.5L451.3,618.5L452.3,618.5L453.3,618.5L454.3,618.5L455.3,618.5L456.3,618.5L457.3,618.5L458.3,618.5L459.3,618.5L460.3,618.5L461.3,618.5L462.3,618.5L463.3,618.5L464.3,618.5L465.3,618.5L466.3,618.5L467.3,618.5L468.3,618.5L469.3,618.5L470.3,618.5L471.3,618.5L472.3,618.5L473.3,618.5L474.3,618.5L475.3,618.5L476.3,618.5L477.3,618.5L478.3,618.5L479.3,618.5L480.3,618.5L481.3,618.5L482.3,618.5L483.3,618.5L484.3,618.5L485.3,618.5L486.3,618.5L487.3,618.5L488.3,618.5L489.3,618.5L490.3,618.5L491.3,618.5L492.3,618.5L493.3,618.5L494.3,618.5L495.3,618.5L496.3,618.5L497.3,618.5L498.3,618.5L499.3,618.5L500.3,618.5L501.3,618.5L502.3,618.5L503.3,618.5L504.3,618.5L505.3,618.5L506.3,618.5L507.3,618.5L508.3,618.5L509.3,618.5L510.3,618.5L511.3,618.5L512.3,618.5L513.3,618.5L514.3,618.5L515.3,618.5L516.3,618.5L517.3,618.5L518.3,618.5L519.3,618.5L520.3,618.5L521.3,618.5L522.3,618.5L523.3,618.5L524.3,618.5L525.3,618.5L526.3,618.5L527.3,618.5L528.3,618.5L529.3,618.5L530.3,618.5L531.3,618.5L532.3,618.5L533.3,618.5L534.3,618.5L535.3,618.5L536.3,618.5L537.3,618.5L538.3,618.5L539.3,618.5L540.3,618.5L541.3,618.5L542.3,618.5L543.3,618.5L544.3,618.5L545.3,618.5L546.3,618.5L547.3,618.5L548.3,618.5L549.3,618.5L550.3,618.5L551.3,618.5L552.3,618.5L553.3,618.5L554.3,618.5L555.3,618.5L556.3,618.5L557.3,618.5L558.3,618.5L559.3,618.5L560.3,618.5L561.3,618.5L562.3,618.5L563.3,618.5L564.3,618.5L565.3,618.5L566.3,618.5L567.3,618.5L568.3,618.5L569.3,618.5L570.3,618.5L571.3,618.5L572.3,618.5L573.3,618.5L574.3,618.5L575.3,618.5L576.3,618.5L577.3,618.5L578.3,618.5L579.3,618.5L580.3,618.5L581.3,618.5L582.3,618.5L583.3,618.5L584.3,618.5L585.3,618.5L586.3,618.5L587.3,618.5L588.3,618.5L589.3,618.5L590.3,618.5L591.3,618.5L592.3,618.5L593.3,618.5L594.3,618.5L595.3,618.5L596.3,618.5L597.3,618.5L598.3,618.5L599.3,618.5L600.3,618.5L601.3,618.5L602.3,618.5L603.3,618.5L604.3,618.5L605.3,618.5L606.3,618.5L607.3,618.5L608.3,618.5L609.3,618.5L610.3,618.5L611.3,618.5L612.3,618.5L613.3,618.5L614,618.5L614.3,617.7L615,615.9L615.3,615.9L616.3,615.9L617.3,615.9L618.3,615.9L619.3,615.9L620.3,615.9L621.3,615.9L622.3,615.9L623.3,615.9L624.3,615.9L625.3,615.9L626.3,615.9L627.3,615.9L628.3,615.9L629.3,615.9L630.3,615.9L631.3,615.9L632.3,615.9L633.3,615.9L634.3,615.9L635.3,615.9L636.3,615.9L637.3,615.9L638.3,615.9L639.3,615.9L640.3,615.9L641.3,615.9L642.3,615.9L643.3,615.9L644.3,615.9L645.3,615.9L646.3,615.9L647.3,615.9L648.3,615.9L649.3,615.9L650.3,615.9L651.3,615.9L652.3,615.9L653.3,615.9L654.3,615.9L655.3,615.9L656.3,615.9L657.3,615.9L658.3,615.9L659.3,615.9L660.3,615.9L661.3,615.9L662.3,615.9L663.3,615.9L664.3,615.9L665.3,615.9L666.3,615.9L667.3,615.9L668.3,615.9L669.3,615.9L670.3,615.9L671.3,615.9L672.3,615.9L673.3,615.9L674.3,615.9L675.3,615.9L676.3,615.9L677.3,615.9L678.3,615.9L679.3,615.9L680.3,615.9L681.3,615.9L682.3,615.9L683.3,615.9L684.3,615.9L685.3,615.9L686.3,615.9L687.3,615.9L688.3,615.9L689.3,615.9L690.3,615.9L691.3,615.9L692.3,615.9L693.3,615.9L694.3,615.9L695.3,615.9L696.3,615.9L697.3,615.9L698.3,615.9L699.3,615.9L700.3,615.9L701.3,615.9L702.3,615.9L703.3,615.9L704.3,615.9L704.5,615.9L705.3,599.5L706,585.1L706.3,578.3L707.3,555.7L708,539.9L708.3,535.4L709.3,520.3L709.5,517.3L710.3,528.6L711,531.4L711.3,528L712.3,516.7L712.5,514.4L713.3,534.2L714.2,545.5L714.3,544.9L715.3,538.4L715.5,537.1L716.3,541.6L716.5,542.7L717.3,534.2L718.3,523.6L718.5,521.5L719.3,531.7L719.5,534.2L720.3,537.2L721,539.9L721.3,537.3L722,531.4L722.3,527.6L723,518.7L723.3,518.4L724.3,517.5L724.5,517.3L725.2,531.4L725.3,531.9L726,535.6L726.3,534.2L727.3,529.5L727.5,528.6L728.3,521.8L729.3,513.3L729.5,511.6L730.3,522.9L731,525.8L731.3,524.1L732.3,518.4L732.5,517.3L733.2,556.9L733.3,560.4L734,585.1L734.3,588.9L735.3,601.7L736,610.6L736.3,611.3L737.3,613.9L738,615.7L738.3,615.7L739.3,615.9L740.3,616.1L741,616.2L741.3,616.2L742.3,616.2L743.3,616.2L744.3,616.2L745.3,616.2L746.3,616.2L747.3,616.2L748.3,616.2L749.3,616.2L750.3,616.2L751.3,616.2L752.3,616.2L753.3,616.2L754.3,616.2L755.3,616.2L756.3,616.2L757.3,616.2L758.3,616.2L759.3,616.2L760.3,616.2L761.3,616.2L762.3,616.2L763.3,616.2L764.3,616.2L765.3,616.2L766.3,616.2L767.3,616.2L768.3,616.2L769.3,616.2L770.3,616.2L771.3,616.2L772.3,616.2L773.3,616.2L774.3,616.2L775.3,616.2L776.3,616.2L777.3,616.2L778.3,616.2L779.3,616.2L780.3,616.2L781.3,616.2L782.3,616.2L783.3,616.2L784.3,616.2L785.3,616.2L786.3,616.2L787.3,616.2L788.3,616.2L789.3,616.2L790.3,616.2L791.3,616.2L792.3,616.2L793.3,616.2L794.3,616.2L795.3,616.2L796.3,616.2L797.3,616.2L798.3,616.2L799.3,616.2L800.3,616.2L801.3,616.2L802.3,616.2L803.3,616.2L804,616.2L804.3,615.7L805,614.5L805.3,614.5L806.3,614.5L807.3,614.5L808.3,614.5L809.3,614.5L810.3,614.5L811.3,614.5L812.3,614.5L813.3,614.5L814.3,614.5L815.3,614.5L816.3,614.5L817.3,614.5L818.3,614.5L819.3,614.5L820.3,614.5L821.3,614.5L822.3,614.5L823.3,614.5L824.3,614.5L825.3,614.5L826.3,614.5L827,614.5L827.3,615L828,616.2L828.3,616.2L829.3,616.2L830.3,616.2L831.3,616.2L832.3,616.2L833.3,616.2L834.3,616.2L835.3,616.2L836.3,616.2L837.3,616.2L838.3,616.2L839.3,616.2L840.3,616.2L841.3,616.2L842.3,616.2L843.3,616.2L844.3,616.2L845.3,616.2L846.3,616.2L847.3,616.2L848.3,616.2L849.3,616.2L850.3,616.2L851.3,616.2L852.3,616.2L853.3,616.2L854.3,616.2L855.3,616.2L856.3,616.2L857.3,616.2L858.3,616.2L859.3,616.2L860.3,616.2L861.3,616.2L862.3,616.2L863.3,616.2L864.3,616.2L865.3,616.2L866.3,616.2L867.3,616.2L868.3,616.2L869.3,616.2L870.3,616.2L871.3,616.2L872.3,616.2L873.3,616.2L874.3,616.2L875.3,616.2L876.3,616.2L877.3,616.2L878.3,616.2L879.3,616.2L880.3,616.2L881.3,616.2L882.3,616.2L883.3,616.2L884.3,616.2L885.3,616.2L886.3,616.2L887.3,616.2L888.3,616.2L889.3,616.2L890.3,616.2L891.3,616.2L892.3,616.2L893.3,616.2L894.3,616.2L895.3,616.2L896.3,616.2L897.3,616.2L897.6,616.2" fill="none" stroke="#a3e02a" stroke-width="1.5" stroke-linejoin="round"/>
<path d="M391.3,612.9L392.3,611.5L393.3,612.3L394.3,611.2L395.3,611.1L396.3,613.7L397.3,613.9L398.3,610.2L399.3,612.8L400.3,612.9L401.3,609.5L402.3,611.8L403.3,610.2L404.3,611.8L405.3,611.1L406.3,613.3L407.3,611.1L408.3,610.1L409.3,611.6L410.3,610.6L411.3,610.9L412.3,613.7L413.3,610.6L414.3,611.3L415.3,612.6L416.3,613.8L417.3,610.1L418.3,611.9L419.3,610.7L420.3,610L421.3,610.8L422.3,609.8L423.3,612.2L424.3,610.4L425.3,612L426.3,609.8L427.3,610L428.3,613.6L429.3,613.4L430.3,613L431.3,609.6L432.3,612L433.3,611.2L434.3,612.6L435.3,611.7L436.3,608L437.3,612.4L438.3,611.4L439.3,611.4L440.3,609.9L441.3,610.9L442.3,609.8L443.3,610.1L444.3,609.5L445.3,611L446.3,613.3L447.3,610.1L448.3,609.7L449.3,609.9L450.3,611.5L451.3,610.8L452.3,613.1L453.3,610.3L454.3,611.4L455.3,612.7L456.3,613.8L457.3,610.2L458.3,609.6L459.3,613.6L460.3,610.4L461.3,612.2L462.3,613.4L463.3,612.7L464.3,610.6L465.3,610.1L466.3,613.9L467.3,611.3L468.3,613.9L469.3,610.8L470.3,612.6L471.3,610.1L472.3,609.6L473.3,611.8L474.3,609.5L475.3,612.7L476.3,613.7L477.3,611.4L478.3,613.9L479.3,613.2L480.3,612.2L481.3,611.3L482.3,613.4L483.3,613.9L484.3,610.1L485.3,612.7L486.3,609.7L487.3,610L488.3,612.4L489.3,612L490.3,611.7L491.3,611.2L492.3,611.4L493.3,611.6L494.3,611.3L495.3,609.8L496.3,611.8L497.3,612.1L498.3,610.8L499.3,613L500.3,612.7L501.3,609.7L502.3,611.7L503.3,611.6L504.3,614L505.3,612.2L506.3,611.5L507.3,614L508.3,611.3L509.3,611.2L510.3,613.8L511.3,611.3L512.3,612L513.3,611L514.3,612.5L515.3,610.9L516.3,610.8L517.3,614L518.3,613.8L519.3,611.1L520.3,609.8L521.3,613L522.3,612.1L523.3,611.4L524.3,612.7L525.3,612.5L526.3,612.7L527.3,612.5L528.3,611.4L529.3,612.8L530.3,612.4L531.3,610.6L532.3,614L533.3,611.6L534.3,610.8L535.3,612.7L536.3,613.1L537.3,610.5L538.3,613.1L539.3,613.3L540.3,612.2L541.3,611L542.3,613.7L543.3,612.7L544.3,612.6L545.3,610.4L546.3,612.2L547.3,610.3L548.3,613.4L549.3,612.6L550.3,611.2L551.3,610.2L552.3,612.1L553.3,613.1L554.3,613.6L555.3,611.8L556.3,613.3L557.3,610.5L558.3,610.4L559.3,613.3L560.3,612.9L561.3,610.5L562.3,611.3L563.3,610.5L564.3,612.6L565.3,613.6L566.3,612.9L567.3,610.6L568.3,613L569.3,612.6L570.3,612.3L571.3,612.3L572.3,612.3L573.3,610L574.3,613.5L575.3,614.2L576.3,609.9L577.3,610.2L578.3,609.7L579.3,612.2L580.3,609.9L581.3,610L582.3,613.2L583.3,610.8L584.3,610.4L585.3,611.2L586.3,611.9L587.3,612.9L588.3,612.7L589.3,613.2L590.3,613.9L591.3,611.5L592.3,612.9L593.3,610.5L594.3,614L595.3,610.1L596.3,611.1L597.3,610L598.3,610.2L599.3,610.2L600.3,611.6L601.3,614.2L602.3,610.9L603.3,613.4L604.3,612.9L605.3,611.2L606.3,611.9L607.3,612.4L608.3,610L609.3,611.5L610.3,612.7L611.3,613.1L612.3,611.2L613.3,612.3L614.3,611.5L615.3,614.8L616.3,622.4L617.3,623L618.3,622.2L619.3,624.1L620.3,622.5L621.3,622.2L622.3,622.6L623.3,622.6L624.3,623.3L625.3,616.1L626.3,610.1L627.3,611.2L628.3,610.6L629.3,610.5L630.3,609.7L631.3,610L632.3,609.8L633.3,608.9L634.3,611.1L635.3,610.9L636.3,610.6L637.3,610.6L638.3,610.7L639.3,610.1L640.3,617.3L641.3,624.2L642.3,623.1L643.3,623.7L644.3,623.7L645.3,623.7L646.3,622.9L647.3,623.1L648.3,623.8L649.3,624.3L650.3,610.6L651.3,622.8L652.3,615.7L653.3,611.1L654.3,612.2L655.3,613.1L656.3,613L657.3,612.5L658.3,613.6L659.3,618.4L660.3,623.3L661.3,622.2L662.3,622.7L663.3,623.2L664.3,621.3L665.3,614L666.3,608.6L667.3,609.4L668.3,608.7L669.3,609.4L670.3,610L671.3,609.2L672.3,608.8L673.3,610.6L674.3,617.2L675.3,623.8L676.3,622.6L677.3,622.5L678.3,624.1L679.3,622.7L680.3,623.1L681.3,624.6L682.3,624.1L683.3,625.2L684.3,621L685.3,614.1L686.3,608.4L687.3,608.7L688.3,609.1L689.3,608.9L690.3,609.5L691.3,610.8L692.3,609.5L693.3,611.2L694.3,610.9L695.3,609.1L696.3,611.2L697.3,613.6L698.3,621.9L699.3,621.6L700.3,623.8L701.3,624.5L702.3,622.4L703.3,620.9L704.3,606.4L705.3,588.3L706.3,580.1L707.3,567L708.3,558.6L709.3,557.8L710.3,557.1L711.3,550.7L712.3,552.6L713.3,554.1L714.3,551.3L715.3,548.9L716.3,549.5L717.3,546.5L718.3,547L719.3,548.6L720.3,549.3L721.3,548.5L722.3,543.6L723.3,546.4L724.3,546.6L725.3,544.3L726.3,544.3L727.3,543.9L728.3,536.5L729.3,530.8L730.3,527.2L731.3,524.7L732.3,530L733.3,561.3L734.3,590.8L735.3,607.3L736.3,612L737.3,616.6L738.3,618.1L739.3,619.6L740.3,619.1L741.3,615L742.3,608.1L743.3,609.6L744.3,609.1L745.3,609.7L746.3,616.7L747.3,620.8L748.3,620.9L749.3,624L750.3,624.1L751.3,623.7L752.3,622.4L753.3,620.4L754.3,615.8L755.3,612.7L756.3,609.8L757.3,608.7L758.3,606.8L759.3,604.9L760.3,607.2L761.3,606.3L762.3,608.1L763.3,607.1L764.3,605.2L765.3,607.5L766.3,604L767.3,603.9L768.3,607.6L769.3,603.8L770.3,606.3L771.3,604.5L772.3,604.6L773.3,606.7L774.3,605L775.3,605.1L776.3,604.4L777.3,606.8L778.3,604.6L779.3,603.7L780.3,605L781.3,605.6L782.3,607.5L783.3,605.8L784.3,606.5L785.3,604.8L786.3,605L787.3,605.5L788.3,607.2L789.3,605.1L790.3,605.2L791.3,607.3L792.3,597.6L793.3,605.1L794.3,607.5L795.3,603.9L796.3,607.4L797.3,606.6L798.3,604.8L799.3,589.1L800.3,605.6L801.3,605.2L802.3,606L803.3,606.7L804.3,607.3L805.3,607.8L806.3,604.9L807.3,604.7L808.3,605.7L809.3,604.8L810.3,606.5L811.3,606.9L812.3,606.4L813.3,604.2L814.3,607.9L815.3,605.8L816.3,607L817.3,604.7L818.3,606.5L819.3,606.6L820.3,606.3L821.3,605.7L822.3,604.6L823.3,606.5L824.3,604.3L825.3,607.6L826.3,606.9L827.3,607.7L828.3,607.6L829.3,604.6L830.3,604.9L831.3,607.3L832.3,607.3L833.3,606.3L834.3,596.4L835.3,604.5L836.3,604.8L837.3,595.9L838.3,607.5L839.3,606.4L840.3,607.3L841.3,591.9L842.3,605.6L843.3,607.3L844.3,597.8L845.3,604.7L846.3,608.1L847.3,595.9L848.3,595.9L849.3,603.9L850.3,606.5L851.3,605.7L852.3,605.6L853.3,605.3L854.3,603.8L855.3,605.1L856.3,606.9L857.3,604.3L858.3,606L859.3,605.5L860.3,604.9L861.3,608.2L862.3,604.7L863.3,605.2L864.3,606L865.3,605.9L866.3,606.2L867.3,607.4L868.3,605.8L869.3,608.1L870.3,606L871.3,605.3L872.3,606.2L873.3,605.7L874.3,603.9L875.3,595.3L876.3,595.3L877.3,604.7L878.3,605.4L879.3,608L880.3,606.6L881.3,607.2L882.3,607.9L883.3,605.8L884.3,604.1L885.3,606.8L886.3,604.3L887.3,605.1L888.3,607.7L889.3,604.4L890.3,605.6L891.3,604.1L892.3,605.1L893.3,604.9L894.3,606.7L895.3,604.6L896.3,603.2L897.3,604.4L897.6,606.3" fill="none" stroke="#f7c234" stroke-width="1.700" stroke-linejoin="round"/>
<path d="M391.3,616.5L392.3,616.5L393.3,616.5L394.3,616.5L395.3,616.5L396.3,616.5L397.3,616.5L398.3,616.5L399.3,616.5L400.3,617.5L401.3,617.5L402.3,616.5L403.3,616.5L404.3,616.5L405.3,617.5L406.3,617.5L407.3,617.5L408.3,617.5L409.3,616.5L410.3,616.5L411.3,616.5L412.3,616.5L413.3,616.5L414.3,616.5L415.3,616.5L416.3,616.5L417.3,616.5L418.3,617.5L419.3,617.5L420.3,616.5L421.3,616.5L422.3,616.5L423.3,617.5L424.3,617.5L425.3,617.5L426.3,617.5L427.3,616.5L428.3,616.5L429.3,616.5L430.3,616.5L431.3,616.6L432.3,616.6L433.3,616.6L434.3,616.6L435.3,616.6L436.3,616.6L437.3,616.6L438.3,616.6L439.3,616.6L440.3,616.6L441.3,616.6L442.3,616.6L443.3,616.6L444.3,616.6L445.3,617.6L446.3,617.6L447.3,616.6L448.3,616.6L449.3,616.6L450.3,617.6L451.3,617.6L452.3,617.6L453.3,617.6L454.3,616.6L455.3,616.6L456.3,616.6L457.3,616.6L458.3,616.6L459.3,616.6L460.3,616.6L461.3,616.6L462.3,616.6L463.3,617.6L464.3,617.6L465.3,616.6L466.3,616.6L467.3,616.6L468.3,617.6L469.3,617.6L470.3,617.6L471.3,617.6L472.3,616.6L473.3,616.6L474.3,616.6L475.3,616.6L476.3,616.6L477.3,616.6L478.3,616.6L479.3,616.6L480.3,616.6L481.3,616.6L482.3,616.6L483.3,616.6L484.3,616.6L485.3,616.6L486.3,616.6L487.3,616.6L488.3,616.6L489.3,616.6L490.3,617.6L491.3,617.6L492.3,616.6L493.3,616.6L494.3,616.6L495.3,617.6L496.3,617.6L497.3,617.6L498.3,617.6L499.3,616.6L500.3,616.6L501.3,616.6L502.3,616.6L503.3,616.6L504.3,616.6L505.3,616.6L506.3,616.6L507.3,616.6L508.3,617.6L509.3,617.6L510.3,616.7L511.3,616.7L512.3,616.7L513.3,617.6L514.3,617.6L515.3,617.6L516.3,617.6L517.3,616.7L518.3,616.7L519.3,616.7L520.3,616.7L521.3,616.7L522.3,616.7L523.3,616.7L524.3,616.7L525.3,616.7L526.3,616.7L527.3,616.7L528.3,616.7L529.3,616.7L530.3,616.7L531.3,616.7L532.3,616.7L533.3,616.7L534.3,616.7L535.3,617.7L536.3,617.7L537.3,616.7L538.3,616.7L539.3,616.7L540.3,617.7L541.3,617.7L542.3,617.7L543.3,617.7L544.3,616.7L545.3,616.7L546.3,616.7L547.3,616.7L548.3,616.7L549.3,616.7L550.3,616.7L551.3,616.7L552.3,616.7L553.3,617.7L554.3,617.7L555.3,616.7L556.3,616.7L557.3,616.7L558.3,617.7L559.3,617.7L560.3,617.7L561.3,617.7L562.3,616.7L563.3,616.7L564.3,616.7L565.3,616.7L566.3,616.7L567.3,616.7L568.3,616.7L569.3,616.7L570.3,616.7L571.3,616.7L572.3,616.7L573.3,616.7L574.3,616.7L575.3,616.7L576.3,616.7L577.3,616.7L578.3,616.7L579.3,616.7L580.3,617.7L581.3,617.7L582.3,616.7L583.3,616.7L584.3,616.7L585.3,617.7L586.3,617.7L587.3,617.7L588.3,617.7L589.3,616.8L590.3,616.8L591.3,616.8L592.3,616.8L593.3,616.8L594.3,616.8L595.3,616.8L596.3,616.8L597.3,616.8L598.3,617.8L599.3,617.8L600.3,616.8L601.3,616.8L602.3,616.8L603.3,617.8L604.3,617.8L605.3,617.8L606.3,617.8L607.3,616.8L608.3,616.8L609.3,616.8L610.3,616.8L611.3,616.8L612.3,616.8L613.3,616.7L614.3,616.6L615.3,617.1L616.3,618.9L617.3,620.2L618.3,620.2L619.3,620.2L620.3,620.2L621.3,620.2L622.3,620.2L623.3,620.2L624.3,619.5L625.3,617.4L626.3,615.2L627.3,613.7L628.3,613.7L629.3,613.7L630.3,613.7L631.3,613.7L632.3,613.7L633.3,613.7L634.3,613.7L635.3,613.7L636.3,613.7L637.3,613.7L638.3,613.7L639.3,614.6L640.3,617.5L641.3,619.6L642.3,619.6L643.3,619.6L644.3,619.6L645.3,619.6L646.3,619.6L647.3,619.6L648.3,619.6L649.3,619.6L650.3,619.6L651.3,618.8L652.3,616.3L653.3,614.5L654.3,614.5L655.3,614.5L656.3,614.5L657.3,614.5L658.3,615.3L659.3,617.8L660.3,619.6L661.3,619.6L662.3,619.6L663.3,619.6L664.3,618.7L665.3,615.6L666.3,613.4L667.3,613.4L668.3,613.4L669.3,613.4L670.3,613.4L671.3,613.4L672.3,613.4L673.3,613.4L674.3,616.4L675.3,619L676.3,619L677.3,619L678.3,619L679.3,619L680.3,619L681.3,619L682.3,619L683.3,619L684.3,618.2L685.3,615.4L686.3,613.4L687.3,613.4L688.3,613.4L689.3,613.4L690.3,613.4L691.3,613.4L692.3,613.4L693.3,613.4L694.3,613.4L695.3,613.4L696.3,613.4L697.3,614.4L698.3,617.8L699.3,618.5L700.3,618.5L701.3,618.5L702.3,618.5L703.3,617.3L704.3,613.3L705.3,607.3L706.3,597.6L707.3,588.7L708.3,584L709.3,579.4L710.3,576.2L711.3,574.8L712.3,573L713.3,572.7L714.3,572.1L715.3,571.3L716.3,570.9L717.3,570.9L718.3,571L719.3,569.5L720.3,569.4L721.3,569.9L722.3,569.5L723.3,569.1L724.3,568L725.3,568.6L726.3,568L727.3,567.8L728.3,566.5L729.3,566.7L730.3,566.1L731.3,565.2L732.3,565.8L733.3,570.6L734.3,580.9L735.3,592.7L736.3,599L737.3,604.3L738.3,607L739.3,609.8L740.3,611.7L741.3,611.5L742.3,611.4L743.3,611.2L744.3,611.1L745.3,610.9L746.3,611.8L747.3,615.1L748.3,617.5L749.3,617.9L750.3,618.3L751.3,618.7L752.3,618.4L753.3,616.1L754.3,614.3L755.3,613.5L756.3,612.8L757.3,612.2L758.3,612L759.3,611.9L760.3,611.7L761.3,611.5L762.3,611.3L763.3,611.1L764.3,611L765.3,610.8L766.3,610.7L767.3,610.6L768.3,610.4L769.3,610.3L770.3,610.2L771.3,610.1L772.3,610L773.3,610L774.3,610L775.3,610L776.3,610L777.3,610L778.3,610L779.3,610L780.3,610L781.3,610L782.3,610L783.3,610L784.3,610L785.3,610L786.3,610L787.3,610L788.3,610L789.3,610L790.3,610L791.3,610L792.3,610L793.3,610L794.3,610L795.3,610L796.3,610L797.3,610L798.3,610L799.3,610L800.3,610L801.3,610L802.3,609.9L803.3,609.9L804.3,609.9L805.3,609.8L806.3,609.8L807.3,609.8L808.3,609.8L809.3,609.7L810.3,609.7L811.3,609.7L812.3,609.6L813.3,609.6L814.3,609.6L815.3,609.6L816.3,609.5L817.3,609.5L818.3,609.5L819.3,609.5L820.3,609.4L821.3,609.4L822.3,609.4L823.3,609.3L824.3,609.3L825.3,609.3L826.3,609.3L827.3,609.2L828.3,609.2L829.3,609.2L830.3,609.1L831.3,609.1L832.3,609.1L833.3,609.1L834.3,609.1L835.3,609.1L836.3,609.1L837.3,609.1L838.3,609.1L839.3,609.1L840.3,609.1L841.3,609.1L842.3,609.1L843.3,609.1L844.3,609L845.3,609L846.3,609L847.3,609L848.3,609L849.3,609L850.3,609L851.3,609L852.3,609L853.3,609L854.3,609L855.3,609L856.3,609L857.3,609L858.3,608.9L859.3,608.9L860.3,608.9L861.3,608.9L862.3,608.9L863.3,608.9L864.3,608.9L865.3,608.9L866.3,608.9L867.3,608.9L868.3,608.9L869.3,608.9L870.3,608.9L871.3,609.1L872.3,609.2L873.3,609.3L874.3,609.5L875.3,609.6L876.3,609.8L877.3,609.9L878.3,610L879.3,610.2L880.3,610.3L881.3,610.3L882.3,610.3L883.3,610.3L884.3,610.3L885.3,610.4L886.3,610.4L887.3,610.4L888.3,610.4L889.3,610.4L890.3,610.4L891.3,610.5L892.3,610.5L893.3,610.5L894.3,610.5L895.3,610.5L896.3,610.5L897.3,610.6L897.6,610.6" fill="none" stroke="#f0525a" stroke-width="1.600" stroke-linejoin="round"/>
<rect x="639.1" y="375.4" width="9" height="8.700" fill="#a6e22e"/>
<rect x="719.4" y="375.4" width="9" height="8.700" fill="#f5c043"/>
<rect x="800.2" y="375.4" width="9" height="8.700" fill="#f0525a"/>
<path d="M1003.5,432.7H1509.3V698.2H1003.5Z" fill="url(#gM)"/>
<path d="M1003.5,416.1V698.2M1042.2,416.1V698.2M1084.3,416.1V698.2M1126.4,416.1V698.2M1168.6,416.1V698.2M1210.7,416.1V698.2M1252.8,416.1V698.2M1294.9,416.1V698.2M1337,416.1V698.2M1379.2,416.1V698.2M1421.3,416.1V698.2M1463.4,416.1V698.2M1505.5,416.1V698.2M1509.3,416.1V698.2" stroke="#d6dcc8" stroke-width="1" stroke-dasharray="1 1" fill="none" shape-rendering="crispEdges" opacity=".8"/>
<path d="M1003.5,698.500H1509.3" stroke="#d0d0d0" stroke-width="1"/>
<path d="M1003.5,433.7H1509.3" stroke="#ade520" stroke-width="2"/>
<path d="M1003.5,417.2H1509.3" stroke="#3cb4f0" stroke-width="1.400"/>
<path d="M1003.5,645.9L1226.2,644.3L1232.2,645.9L1236.2,645.9L1240.2,644.3L1250.2,644.3L1254.2,645.9L1264.2,645.5L1267.2,644.3L1271.2,645.1L1275.2,644.3L1282.2,644.3L1285.2,645.9L1294.2,645.9L1298.2,644.3L1310.2,644.3L1313.2,645.5L1317.2,645.1L1320.2,602.8L1323.2,584.5L1325.2,585.4L1329.2,585.8L1336.2,585.4L1341.2,584.5L1345.2,585.4L1347.2,623.5L1348.7,639.3L1352.2,638.9L1355.2,637.6L1359.2,638.5L1364.2,638.5L1367.2,636.8L1374.2,636.8L1484.2,635.1L1491.2,634.3L1494.2,635.1L1509.3,634.7" fill="none" stroke="#fbc62c" stroke-width="1.600" stroke-linejoin="round"/>
<path d="M1003.5,635.1L1226.2,633.5L1228.2,633.1L1231.2,641L1236.2,641L1239.2,633.1L1250.2,633.1L1253.2,641L1262.2,641L1266.2,632.7L1270.2,632.7L1273.2,641L1277.2,641L1280.2,632.7L1284.2,632.7L1287.2,641L1293.2,641L1297.2,632.7L1308.2,632.7L1312.2,641L1316.2,641L1320.2,573.7L1323.2,520.6L1326.2,517.3L1336.2,515.7L1341.2,514L1345.2,514.8L1347.2,598.6L1348.7,631.8L1352.2,631.8L1355.2,623.5L1358.2,631L1362.2,631L1366.2,623.5L1374.2,623.5L1509.3,621" fill="none" stroke="#f0525a" stroke-width="1.600" stroke-linejoin="round"/>
<rect x="1242.4" y="375.4" width="9" height="8.700" fill="#a6e22e"/>
<rect x="1304.3" y="375.4" width="9" height="8.700" fill="#fdca26"/>
<rect x="1388.9" y="375.4" width="9" height="8.700" fill="#41b4f5"/>
<rect x="1451" y="375.4" width="9" height="8.700" fill="#f4565a"/>
<path d="M1579.0,482.5H1772.0M1579.0,513.5H1772.0M1579.0,542.5H1772.0M1579.0,573.5H1772.0M1579.0,603.5H1772.0M1579.0,632.5H1772.0M1579.0,663.5H1772.0M1579.0,693.5H1772.0" stroke="#dcdcdc" stroke-width="1" stroke-dasharray="2 1.2" fill="none"/>
<path d="M1578.5,723.3L1579,723.3L1579.5,721.3L1580.5,723.3L1582,723.3L1583,723L1584,723.3L1591.5,723.3L1592.5,721.3L1594,722.1L1595,723.3L1597,723.3L1598,721L1600,721L1602,721L1603,723.3L1603.5,723.3L1604.5,717.3L1605.5,719.3L1606.5,723.3L1609,723.3L1610,721L1611,723.3L1612,723.3L1613,721.3L1614,723.3L1615,723.3L1616,721.7L1617,723.3L1618.5,723.3L1619.5,719.1L1621,721.8L1623,720.7L1624.5,721.7L1625.5,723.3L1630.5,723.3L1631.5,720.3L1633,721.3L1634,723.3L1643.5,723.3L1644.5,715.3L1645.5,714.7L1646.5,720.3L1648.5,717.8L1649.5,717.3L1650.5,723.3L1651,723.3L1652,721.3L1653,723.3L1653.5,723.3L1654.5,721.3L1655.5,723.3L1658.5,723.3L1659.5,721.3L1660.5,723.3L1662.5,723.3L1663.5,722L1664.5,723.3L1665.5,723.3L1666.5,721L1667.5,723.3L1670.5,723.3L1671.5,719.3L1672.5,720.7L1674.5,719.3L1675.5,723.3L1676,723.3L1677,721.5L1678,723.3L1680,723.3L1681,722.3L1682,723.3L1682.5,723.3L1683.5,719.1L1684.5,720.3L1685.5,723.3L1688,723.3L1689,721.3L1690,723.3L1690.5,723.3L1691.5,720L1692.5,721.3L1693.5,723.3L1696,723.3L1697,721.3L1698.5,720.3L1699.5,715.3L1700.5,678.3L1701.3,633.3L1702.2,683.3L1703,709.3L1704,708.3L1705.3,699.8L1706.2,711.3L1707.5,708.3L1709.3,702.8L1710,720.3L1710.6,723.3L1711.5,723.3L1712.5,721.3L1714,721.5L1715,723.3L1715.5,723.3L1716.5,720.3L1718.5,715.3L1719.5,720.3L1720.5,723.3L1721.5,723.3L1722.5,720.9L1723.5,723.3L1735,723.3L1736,721.8L1737.5,720.3L1738.5,723.3L1745.5,723.3L1746.5,721L1747.5,723.3L1748.5,723.3L1749.5,719.3L1750.5,716.8L1751.5,723.3L1753.5,723.3L1754.5,720.3L1755.5,723.3L1757.5,723.3L1758.5,720.3L1759.5,717.3L1760.5,718.3L1761.5,723.3L1763,723.3L1764,721L1765,723.3L1767,723.3L1768,720.3L1769.5,718.9L1771,720.3L1772,723.3Z" fill="#d2f573"/>
<path d="M1579.0,723.5H1772.0" stroke="#cfd1cb" stroke-width="1.200" stroke-dasharray="2 1.2"/>
<path d="M1248.0,825.8H1754.4M1248.0,882.4H1754.4M1248,825.8V908M1287,825.8V908M1329.1,825.8V908M1371.2,825.8V908M1413.4,825.8V908M1455.5,825.8V908M1497.6,825.8V908M1539.7,825.8V908M1581.8,825.8V908M1624,825.8V908M1666.1,825.8V908M1708.2,825.8V908M1750.3,825.8V908M1754.4,825.8V908" stroke="#e3e3e3" stroke-width="1" stroke-dasharray="1 1" fill="none" shape-rendering="crispEdges"/>
<rect x="1729.3" y="781.5" width="9" height="8.700" fill="#a6e22e"/>
<clipPath id="gc1"><rect x="578" y="752" width="297" height="156"/></clipPath><clipPath id="gc2"><rect x="884" y="752" width="297" height="156"/></clipPath>
<circle cx="726.400" cy="982.500" r="111.500" fill="none" stroke="#fff" stroke-width="47" clip-path="url(#gc1)"/>
<circle cx="1032.400" cy="982.500" r="111.500" fill="none" stroke="#fff" stroke-width="47" clip-path="url(#gc2)"/>
<path d="M354.500,893H547.300" stroke="#d6d6d6" stroke-width="1.100" stroke-dasharray="2 1.2"/>
</svg>
<div class="t" style="left:364.06px;top:693.24px;font-size:10px;color:#686c74;transform:scaleX(0.8562);transform-origin:0 0;-webkit-text-stroke:0.2px #686c74;">0 °C</div>
<div class="t" style="left:359.31px;top:636.70px;font-size:10px;color:#686c74;transform:scaleX(0.8562);transform-origin:0 0;-webkit-text-stroke:0.2px #686c74;">20 °C</div>
<div class="t" style="left:359.31px;top:580.15px;font-size:10px;color:#686c74;transform:scaleX(0.8562);transform-origin:0 0;-webkit-text-stroke:0.2px #686c74;">40 °C</div>
<div class="t" style="left:359.31px;top:523.62px;font-size:10px;color:#686c74;transform:scaleX(0.8562);transform-origin:0 0;-webkit-text-stroke:0.2px #686c74;">60 °C</div>
<div class="t" style="left:359.31px;top:467.08px;font-size:10px;color:#686c74;transform:scaleX(0.8562);transform-origin:0 0;-webkit-text-stroke:0.2px #686c74;">80 °C</div>
<div class="t" style="left:354.56px;top:410.54px;font-size:10px;color:#686c74;transform:scaleX(0.8562);transform-origin:0 0;-webkit-text-stroke:0.2px #686c74;">100 °C</div>
<div class="t" style="left:418.58px;top:709.53px;font-size:10px;color:#686c74;transform:scaleX(0.8996);transform-origin:0 0;-webkit-text-stroke:0.2px #686c74;">17:00</div>
<div class="t" style="left:460.54px;top:709.53px;font-size:10px;color:#686c74;transform:scaleX(0.9121);transform-origin:0 0;-webkit-text-stroke:0.2px #686c74;">18:00</div>
<div class="t" style="left:502.66px;top:709.53px;font-size:10px;color:#686c74;transform:scaleX(0.9121);transform-origin:0 0;-webkit-text-stroke:0.2px #686c74;">19:00</div>
<div class="t" style="left:544.06px;top:709.53px;font-size:10px;color:#686c74;letter-spacing:-0.138px;-webkit-text-stroke:0.2px #686c74;">20:00</div>
<div class="t" style="left:586.82px;top:709.53px;font-size:10px;color:#686c74;transform:scaleX(0.9275);transform-origin:0 0;-webkit-text-stroke:0.2px #686c74;">21:00</div>
<div class="t" style="left:628.10px;top:709.53px;font-size:10px;color:#686c74;letter-spacing:-0.037px;-webkit-text-stroke:0.2px #686c74;">22:00</div>
<div class="t" style="left:670.22px;top:709.53px;font-size:10px;color:#686c74;letter-spacing:-0.037px;-webkit-text-stroke:0.2px #686c74;">23:00</div>
<div class="t" style="left:712.09px;top:709.53px;font-size:10px;color:#686c74;letter-spacing:0.113px;-webkit-text-stroke:0.2px #686c74;">00:00</div>
<div class="t" style="left:755.18px;top:709.53px;font-size:10px;color:#686c74;transform:scaleX(0.9402);transform-origin:0 0;-webkit-text-stroke:0.2px #686c74;">01:00</div>
<div class="t" style="left:796.68px;top:709.53px;font-size:10px;color:#686c74;letter-spacing:-0.062px;-webkit-text-stroke:0.2px #686c74;">02:00</div>
<div class="t" style="left:838.65px;top:709.53px;font-size:10px;color:#686c74;letter-spacing:0.012px;-webkit-text-stroke:0.2px #686c74;">03:00</div>
<div class="t" style="left:880.67px;top:709.53px;font-size:10px;color:#686c74;letter-spacing:0.062px;-webkit-text-stroke:0.2px #686c74;">04:00</div>
<div class="t" style="left:652.70px;top:370.77px;font-size:9.6px;color:#a7acb6;transform:scaleX(0.8425);transform-origin:0 0;">GPU</div>
<div class="t" style="left:652.91px;top:379.57px;font-size:9.6px;color:#a7acb6;letter-spacing:-0.008px;">Temperature</div>
<div class="t" style="left:732.97px;top:370.77px;font-size:9.6px;color:#a7acb6;transform:scaleX(0.9059);transform-origin:0 0;">CPU Max</div>
<div class="t" style="left:733.21px;top:379.57px;font-size:9.6px;color:#a7acb6;letter-spacing:-0.008px;">Temperature</div>
<div class="t" style="left:813.43px;top:370.77px;font-size:9.6px;color:#a7acb6;letter-spacing:-0.026px;">Motherboard Average</div>
<div class="t" style="left:814.01px;top:379.57px;font-size:9.6px;color:#a7acb6;letter-spacing:-0.048px;">Temperature</div>
<div class="t" style="left:973.05px;top:693.03px;font-size:10px;color:#686c74;transform:scaleX(0.8743);transform-origin:0 0;-webkit-text-stroke:0.2px #686c74;">0 GB</div>
<div class="t" style="left:973.05px;top:626.66px;font-size:10px;color:#686c74;transform:scaleX(0.8743);transform-origin:0 0;-webkit-text-stroke:0.2px #686c74;">8 GB</div>
<div class="t" style="left:968.15px;top:560.28px;font-size:10px;color:#686c74;transform:scaleX(0.8743);transform-origin:0 0;-webkit-text-stroke:0.2px #686c74;">16 GB</div>
<div class="t" style="left:968.15px;top:493.91px;font-size:10px;color:#686c74;transform:scaleX(0.8743);transform-origin:0 0;-webkit-text-stroke:0.2px #686c74;">24 GB</div>
<div class="t" style="left:968.15px;top:427.54px;font-size:10px;color:#686c74;transform:scaleX(0.8743);transform-origin:0 0;-webkit-text-stroke:0.2px #686c74;">32 GB</div>
<div class="t" style="left:968.15px;top:410.94px;font-size:10px;color:#686c74;transform:scaleX(0.8743);transform-origin:0 0;-webkit-text-stroke:0.2px #686c74;">34 GB</div>
<div class="t" style="left:1030.78px;top:709.53px;font-size:10px;color:#686c74;transform:scaleX(0.8996);transform-origin:0 0;-webkit-text-stroke:0.2px #686c74;">17:00</div>
<div class="t" style="left:1072.74px;top:709.53px;font-size:10px;color:#686c74;transform:scaleX(0.9121);transform-origin:0 0;-webkit-text-stroke:0.2px #686c74;">18:00</div>
<div class="t" style="left:1114.86px;top:709.53px;font-size:10px;color:#686c74;transform:scaleX(0.9121);transform-origin:0 0;-webkit-text-stroke:0.2px #686c74;">19:00</div>
<div class="t" style="left:1156.26px;top:709.53px;font-size:10px;color:#686c74;letter-spacing:-0.138px;-webkit-text-stroke:0.2px #686c74;">20:00</div>
<div class="t" style="left:1199.02px;top:709.53px;font-size:10px;color:#686c74;transform:scaleX(0.9275);transform-origin:0 0;-webkit-text-stroke:0.2px #686c74;">21:00</div>
<div class="t" style="left:1240.30px;top:709.53px;font-size:10px;color:#686c74;letter-spacing:-0.037px;-webkit-text-stroke:0.2px #686c74;">22:00</div>
<div class="t" style="left:1282.42px;top:709.53px;font-size:10px;color:#686c74;letter-spacing:-0.037px;-webkit-text-stroke:0.2px #686c74;">23:00</div>
<div class="t" style="left:1324.29px;top:709.53px;font-size:10px;color:#686c74;letter-spacing:0.112px;-webkit-text-stroke:0.2px #686c74;">00:00</div>
<div class="t" style="left:1367.38px;top:709.53px;font-size:10px;color:#686c74;transform:scaleX(0.9402);transform-origin:0 0;-webkit-text-stroke:0.2px #686c74;">01:00</div>
<div class="t" style="left:1408.88px;top:709.53px;font-size:10px;color:#686c74;letter-spacing:-0.062px;-webkit-text-stroke:0.2px #686c74;">02:00</div>
<div class="t" style="left:1450.85px;top:709.53px;font-size:10px;color:#686c74;letter-spacing:0.013px;-webkit-text-stroke:0.2px #686c74;">03:00</div>
<div class="t" style="left:1492.87px;top:709.53px;font-size:10px;color:#686c74;letter-spacing:0.062px;-webkit-text-stroke:0.2px #686c74;">04:00</div>
<div class="t" style="left:1255.63px;top:370.77px;font-size:9.6px;color:#a7acb6;letter-spacing:0.054px;">Physical</div>
<div class="t" style="left:1255.63px;top:379.57px;font-size:9.6px;color:#a7acb6;letter-spacing:0.102px;">Memory</div>
<div class="t" style="left:1317.58px;top:370.77px;font-size:9.6px;color:#a7acb6;letter-spacing:-0.131px;">Used Physical</div>
<div class="t" style="left:1317.53px;top:379.57px;font-size:9.6px;color:#a7acb6;letter-spacing:0.082px;">Memory</div>
<div class="t" style="left:1402.85px;top:370.77px;font-size:9.6px;color:#a7acb6;transform:scaleX(1.0549);transform-origin:0 0;">Virtual</div>
<div class="t" style="left:1402.13px;top:379.57px;font-size:9.6px;color:#a7acb6;letter-spacing:0.102px;">Memory</div>
<div class="t" style="left:1464.28px;top:370.77px;font-size:9.6px;color:#a7acb6;letter-spacing:0.006px;">Used Virtual</div>
<div class="t" style="left:1464.23px;top:379.57px;font-size:9.6px;color:#a7acb6;letter-spacing:0.082px;">Memory</div>
<div class="t" style="left:1211.92px;top:821.74px;font-size:10px;color:#686c74;transform:scaleX(0.9028);transform-origin:0 0;-webkit-text-stroke:0.2px #686c74;">100 %</div>
<div class="t" style="left:1216.93px;top:877.93px;font-size:10px;color:#686c74;transform:scaleX(0.9028);transform-origin:0 0;-webkit-text-stroke:0.2px #686c74;">80 %</div>
<div class="t" style="left:1742.87px;top:781.27px;font-size:9.6px;color:#a7acb6;transform:scaleX(0.9026);transform-origin:0 0;">CPU</div>
<div class="t" style="left:355.52px;top:367.16px;font-size:17.3px;color:#15171a;transform:scaleX(1.0509);transform-origin:0 0;font-weight:bold;">Temperature</div>
<div class="t" style="left:966.68px;top:367.16px;font-size:17.3px;color:#15171a;letter-spacing:0.646px;font-weight:bold;">RAM</div>
<div class="t" style="left:1579.50px;top:367.16px;font-size:17.3px;color:#15171a;transform:scaleX(1.1573);transform-origin:0 0;-webkit-text-stroke:0.6px #15171a;">Bandwidth</div>
<div class="t" style="left:356.95px;top:777.31px;font-size:17px;color:#15171a;letter-spacing:0.375px;-webkit-text-stroke:0.6px #15171a;">CPU Frequency</div>
<div class="t" style="left:599.78px;top:778.06px;font-size:17.3px;color:#15171a;letter-spacing:0.387px;font-weight:bold;">Memory Allocation %</div>
<div class="t" style="left:905.81px;top:778.06px;font-size:17.3px;color:#15171a;letter-spacing:0.186px;font-weight:bold;">GPU Utilization %</div>
<div class="t" style="left:1212.21px;top:778.06px;font-size:17.3px;color:#15171a;letter-spacing:-0.369px;font-weight:bold;">CPU Usage</div>
<div class="t" style="left:1582.08px;top:391.82px;font-size:64px;color:#17181b;transform:scaleX(0.9056);transform-origin:0 0;-webkit-text-stroke:0.7px #17181b;">0.01</div>
<div class="t" style="left:1715.31px;top:399.70px;font-size:16.3px;color:#17181b;transform:scaleX(1.2928);transform-origin:0 0;-webkit-text-stroke:0.3px #17181b;">Mb/s</div>
<div class="t" style="left:356.98px;top:802.77px;font-size:63px;color:#17181b;letter-spacing:0.930px;-webkit-text-stroke:0.7px #17181b;">3.40</div>
<div class="t" style="left:490.38px;top:811.10px;font-size:16.3px;color:#17181b;letter-spacing:0.615px;-webkit-text-stroke:0.3px #17181b;">GHz</div>
</body></html>
